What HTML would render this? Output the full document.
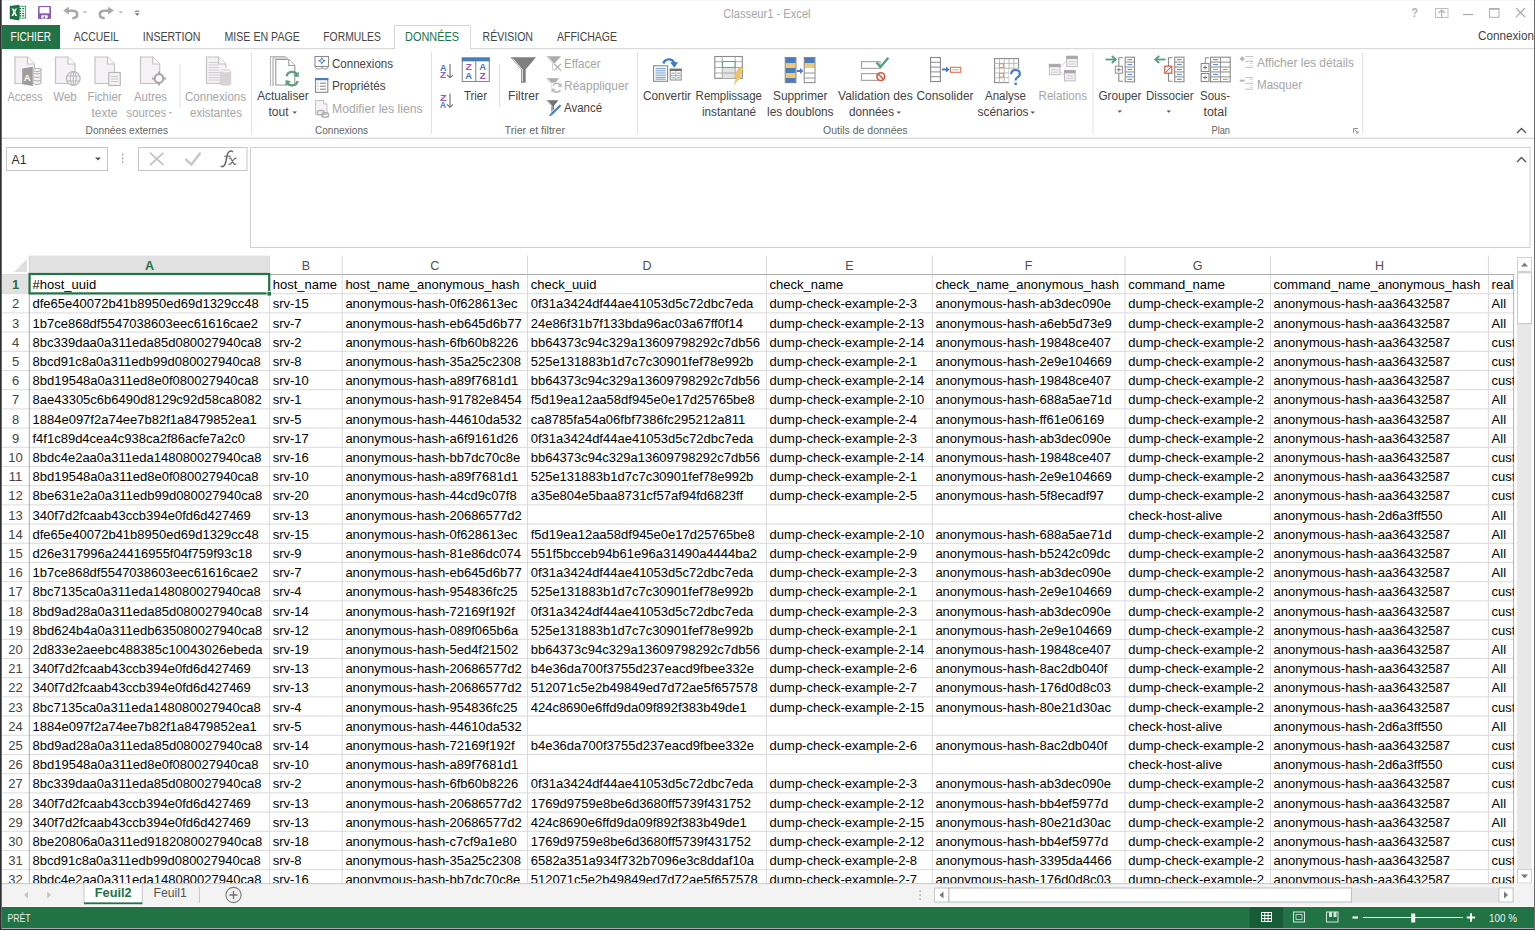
<!DOCTYPE html>
<html><head><meta charset="utf-8"><title>Classeur1 - Excel</title>
<style>
html,body{margin:0;padding:0;background:#2d2f31;overflow:hidden;}
svg{display:block;font-family:"Liberation Sans",sans-serif;}
text{white-space:pre;}
</style></head><body>
<svg width="1535" height="930" viewBox="0 0 1535 930">
<rect x="0" y="0" width="1535" height="930" fill="#2d2f31" />
<rect x="1.5" y="0" width="1533" height="929" fill="#a9a9a9" />
<rect x="2" y="0" width="1532" height="928" fill="#ffffff" />
<rect x="2" y="0" width="1532" height="1" fill="#f6f6f6" />
<rect x="19" y="6.3" width="6.6" height="11.8" fill="#ffffff" stroke="#4f9a6c" stroke-width="1" />
<line x1="19.2" y1="8.6" x2="21.2" y2="8.6" stroke="#1f7043" stroke-width="1.3" />
<line x1="22.2" y1="8.6" x2="24.2" y2="8.6" stroke="#1f7043" stroke-width="1.3" />
<line x1="19.2" y1="11.1" x2="21.2" y2="11.1" stroke="#1f7043" stroke-width="1.3" />
<line x1="22.2" y1="11.1" x2="24.2" y2="11.1" stroke="#5aa57a" stroke-width="1.3" />
<line x1="19.2" y1="13.5" x2="21.2" y2="13.5" stroke="#1f7043" stroke-width="1.3" />
<line x1="22.2" y1="13.5" x2="24.2" y2="13.5" stroke="#1f7043" stroke-width="1.3" />
<line x1="19.2" y1="15.8" x2="21.2" y2="15.8" stroke="#1f7043" stroke-width="1.3" />
<line x1="22.2" y1="15.8" x2="24.2" y2="15.8" stroke="#1f7043" stroke-width="1.3" />
<line x1="21.7" y1="6.3" x2="21.7" y2="18.1" stroke="#d8e8de" stroke-width="0.6" />
<path d="M9.8 5.9 L19.3 4.7 L19.3 20.5 L9.8 18.9 Z" fill="#1e7145" />
<path d="M11.7 8.4 L13.5 8.4 L14.4 10.6 L15.3 8.4 L17 8.4 L15.3 12.1 L17.1 15.9 L15.3 15.9 L14.3 13.6 L13.3 15.9 L11.5 15.9 L13.4 12.1 Z" fill="#ffffff" />
<rect x="38" y="6" width="13" height="13" fill="#8a5bb6" rx="1.2"/>
<rect x="39.6" y="7.1" width="9.8" height="6.2" fill="#ffffff" />
<rect x="41.3" y="15.2" width="6.4" height="3.2" fill="#ffffff" rx="0.8"/>
<rect x="43.5" y="16.3" width="1.6" height="2.2" fill="#8a5bb6" />
<path d="M63.2 10.6 L68.8 6.8 L68.8 14.4 Z" fill="#a8a8a8" />
<path d="M67.5 10.8 L72.3 10.8 Q77.2 10.8 77.2 14.5 Q77.2 18 72.3 18.2" fill="none" stroke="#a8a8a8" stroke-width="2.6" />
<path d="M82.5 11.2 L87.3 11.2 L84.9 13.6 Z" fill="#b8b8b8" />
<path d="M113.8 10.6 L108.2 6.8 L108.2 14.4 Z" fill="#a8a8a8" />
<path d="M109.5 10.8 L104.7 10.8 Q99.8 10.8 99.8 14.5 Q99.8 18 104.7 18.2" fill="none" stroke="#a8a8a8" stroke-width="2.6" />
<path d="M118.4 11.2 L123.2 11.2 L120.8 13.6 Z" fill="#b8b8b8" />
<line x1="135" y1="11.2" x2="139.3" y2="11.2" stroke="#6f6f6f" stroke-width="1.1" />
<path d="M134.8 13.2 L139.5 13.2 L137.15 15.8 Z" fill="#6f6f6f" />
<text x="723.30" y="17.50" font-size="12" fill="#a6a6a6" textLength="87.30" lengthAdjust="spacingAndGlyphs" >Classeur1 - Excel</text>
<text x="1411.20" y="17.30" font-size="12.5" fill="#b5b5b5" font-weight="bold" textLength="6.80" lengthAdjust="spacingAndGlyphs" >?</text>
<rect x="1435.5" y="8.5" width="12.5" height="9" fill="none" stroke="#c0c0c0" stroke-width="1" />
<path d="M1438.5 13 L1441.75 10 L1445 13 M1441.75 10.3 L1441.75 17" fill="none" stroke="#b0b0b0" stroke-width="1.2" />
<line x1="1463" y1="14.5" x2="1473.5" y2="14.5" stroke="#aaaaaa" stroke-width="1.2" />
<rect x="1489.5" y="8.5" width="9.5" height="8.8" fill="none" stroke="#b0b0b0" stroke-width="1" />
<line x1="1489.5" y1="9.2" x2="1499" y2="9.2" stroke="#b0b0b0" stroke-width="1.2" />
<path d="M1516 8 L1525 17 M1525 8 L1516 17" fill="none" stroke="#a8a8a8" stroke-width="1.1" />
<rect x="2" y="48" width="1532" height="1.2" fill="#d9d9d9" />
<rect x="2" y="25" width="58" height="24" fill="#217346" />
<text x="10.50" y="41.00" font-size="12.5" fill="#ffffff" textLength="40.50" lengthAdjust="spacingAndGlyphs" >FICHIER</text>
<path d="M394.5 49 L394.5 25.5 L470.3 25.5 L470.3 49" fill="none" stroke="#d4d4d4" stroke-width="1" />
<rect x="395" y="26" width="75" height="24" fill="#ffffff" />
<text x="73.80" y="41.00" font-size="12.5" fill="#444444" textLength="45.00" lengthAdjust="spacingAndGlyphs" >ACCUEIL</text>
<text x="142.80" y="41.00" font-size="12.5" fill="#444444" textLength="57.70" lengthAdjust="spacingAndGlyphs" >INSERTION</text>
<text x="224.50" y="41.00" font-size="12.5" fill="#444444" textLength="75.30" lengthAdjust="spacingAndGlyphs" >MISE EN PAGE</text>
<text x="323.30" y="41.00" font-size="12.5" fill="#444444" textLength="57.50" lengthAdjust="spacingAndGlyphs" >FORMULES</text>
<text x="482.50" y="41.00" font-size="12.5" fill="#444444" textLength="50.50" lengthAdjust="spacingAndGlyphs" >RÉVISION</text>
<text x="557.00" y="41.00" font-size="12.5" fill="#444444" textLength="60.00" lengthAdjust="spacingAndGlyphs" >AFFICHAGE</text>
<text x="405.00" y="41.00" font-size="12.5" fill="#217346" textLength="54.00" lengthAdjust="spacingAndGlyphs" >DONNÉES</text>
<text x="1478.00" y="39.80" font-size="12.5" fill="#444444" textLength="56.00" lengthAdjust="spacingAndGlyphs" >Connexion</text>
<rect x="2" y="137.6" width="1532" height="1.2" fill="#d5d5d5" />
<line x1="251.6" y1="52" x2="251.6" y2="134" stroke="#e1e1e1" stroke-width="1" />
<line x1="431.5" y1="52" x2="431.5" y2="134" stroke="#e1e1e1" stroke-width="1" />
<line x1="637.5" y1="52" x2="637.5" y2="134" stroke="#e1e1e1" stroke-width="1" />
<line x1="1093" y1="52" x2="1093" y2="134" stroke="#e1e1e1" stroke-width="1" />
<line x1="1362.7" y1="52" x2="1362.7" y2="134" stroke="#e1e1e1" stroke-width="1" />
<text x="7.60" y="100.90" font-size="12.5" fill="#a6a6a6" textLength="34.80" lengthAdjust="spacingAndGlyphs" >Access</text>
<text x="53.20" y="100.90" font-size="12.5" fill="#a6a6a6" textLength="23.60" lengthAdjust="spacingAndGlyphs" >Web</text>
<text x="87.50" y="100.90" font-size="12.5" fill="#a6a6a6" textLength="34.00" lengthAdjust="spacingAndGlyphs" >Fichier</text>
<text x="91.50" y="116.60" font-size="12.5" fill="#a6a6a6" textLength="26.00" lengthAdjust="spacingAndGlyphs" >texte</text>
<text x="134.00" y="100.90" font-size="12.5" fill="#a6a6a6" textLength="33.00" lengthAdjust="spacingAndGlyphs" >Autres</text>
<text x="126.60" y="116.60" font-size="12.5" fill="#a6a6a6" textLength="39.60" lengthAdjust="spacingAndGlyphs" >sources</text>
<path d="M168.5 112 L172.5 112 L170.5 114 Z" fill="#bdbdbd" />
<line x1="180" y1="64" x2="180" y2="108" stroke="#e1e1e1" stroke-width="1" />
<text x="185.00" y="100.90" font-size="12.5" fill="#a6a6a6" textLength="61.00" lengthAdjust="spacingAndGlyphs" >Connexions</text>
<text x="190.00" y="116.60" font-size="12.5" fill="#a6a6a6" textLength="52.00" lengthAdjust="spacingAndGlyphs" >existantes</text>
<text x="85.60" y="134.30" font-size="11.5" fill="#666666" textLength="82.40" lengthAdjust="spacingAndGlyphs" >Données externes</text>
<text x="257.20" y="100.40" font-size="12.5" fill="#444444" textLength="51.60" lengthAdjust="spacingAndGlyphs" >Actualiser</text>
<text x="268.50" y="116.00" font-size="12.5" fill="#444444" textLength="20.00" lengthAdjust="spacingAndGlyphs" >tout</text>
<path d="M292.5 111.5 L297 111.5 L294.75 113.8 Z" fill="#555" />
<text x="332.00" y="67.50" font-size="12.5" fill="#444444" textLength="61.00" lengthAdjust="spacingAndGlyphs" >Connexions</text>
<text x="332.00" y="89.70" font-size="12.5" fill="#444444" textLength="53.60" lengthAdjust="spacingAndGlyphs" >Propriétés</text>
<text x="332.00" y="112.50" font-size="12.5" fill="#a6a6a6" textLength="90.60" lengthAdjust="spacingAndGlyphs" >Modifier les liens</text>
<text x="315.00" y="134.30" font-size="11.5" fill="#666666" textLength="53.00" lengthAdjust="spacingAndGlyphs" >Connexions</text>
<text x="464.00" y="100.40" font-size="12.5" fill="#444444" textLength="23.00" lengthAdjust="spacingAndGlyphs" >Trier</text>
<line x1="499.5" y1="64" x2="499.5" y2="107" stroke="#e1e1e1" stroke-width="1" />
<text x="508.00" y="100.40" font-size="12.5" fill="#444444" textLength="31.00" lengthAdjust="spacingAndGlyphs" >Filtrer</text>
<text x="564.00" y="67.80" font-size="12.5" fill="#a6a6a6" textLength="36.60" lengthAdjust="spacingAndGlyphs" >Effacer</text>
<text x="564.00" y="89.70" font-size="12.5" fill="#a6a6a6" textLength="64.60" lengthAdjust="spacingAndGlyphs" >Réappliquer</text>
<text x="564.00" y="112.40" font-size="12.5" fill="#444444" textLength="38.00" lengthAdjust="spacingAndGlyphs" >Avancé</text>
<text x="504.50" y="134.30" font-size="11.5" fill="#666666" textLength="60.50" lengthAdjust="spacingAndGlyphs" >Trier et filtrer</text>
<text x="643.00" y="100.40" font-size="12.5" fill="#444444" textLength="48.00" lengthAdjust="spacingAndGlyphs" >Convertir</text>
<text x="695.60" y="100.40" font-size="12.5" fill="#444444" textLength="66.40" lengthAdjust="spacingAndGlyphs" >Remplissage</text>
<text x="702.00" y="116.00" font-size="12.5" fill="#444444" textLength="54.00" lengthAdjust="spacingAndGlyphs" >instantané</text>
<text x="773.00" y="100.40" font-size="12.5" fill="#444444" textLength="54.50" lengthAdjust="spacingAndGlyphs" >Supprimer</text>
<text x="767.00" y="116.00" font-size="12.5" fill="#444444" textLength="66.50" lengthAdjust="spacingAndGlyphs" >les doublons</text>
<text x="838.00" y="100.40" font-size="12.5" fill="#444444" textLength="74.70" lengthAdjust="spacingAndGlyphs" >Validation des</text>
<text x="849.00" y="116.00" font-size="12.5" fill="#444444" textLength="45.00" lengthAdjust="spacingAndGlyphs" >données</text>
<path d="M896.5 111.5 L901 111.5 L898.75 113.8 Z" fill="#555" />
<text x="916.50" y="100.40" font-size="12.5" fill="#444444" textLength="57.00" lengthAdjust="spacingAndGlyphs" >Consolider</text>
<text x="985.00" y="100.40" font-size="12.5" fill="#444444" textLength="41.00" lengthAdjust="spacingAndGlyphs" >Analyse</text>
<text x="977.50" y="116.00" font-size="12.5" fill="#444444" textLength="51.00" lengthAdjust="spacingAndGlyphs" >scénarios</text>
<path d="M1030.5 111.5 L1035 111.5 L1032.75 113.8 Z" fill="#555" />
<text x="1038.50" y="100.40" font-size="12.5" fill="#a6a6a6" textLength="48.50" lengthAdjust="spacingAndGlyphs" >Relations</text>
<text x="823.00" y="134.30" font-size="11.5" fill="#666666" textLength="84.60" lengthAdjust="spacingAndGlyphs" >Outils de données</text>
<text x="1098.50" y="100.40" font-size="12.5" fill="#444444" textLength="43.00" lengthAdjust="spacingAndGlyphs" >Grouper</text>
<path d="M1117.5 110.5 L1122 110.5 L1119.75 112.8 Z" fill="#555" />
<text x="1146.00" y="100.40" font-size="12.5" fill="#444444" textLength="47.50" lengthAdjust="spacingAndGlyphs" >Dissocier</text>
<path d="M1166.5 110.5 L1171 110.5 L1168.75 112.8 Z" fill="#555" />
<text x="1200.00" y="100.40" font-size="12.5" fill="#444444" textLength="30.00" lengthAdjust="spacingAndGlyphs" >Sous-</text>
<text x="1203.50" y="116.00" font-size="12.5" fill="#444444" textLength="23.50" lengthAdjust="spacingAndGlyphs" >total</text>
<text x="1257.00" y="67.30" font-size="12.5" fill="#a6a6a6" textLength="97.00" lengthAdjust="spacingAndGlyphs" >Afficher les détails</text>
<text x="1257.00" y="88.90" font-size="12.5" fill="#a6a6a6" textLength="45.00" lengthAdjust="spacingAndGlyphs" >Masquer</text>
<text x="1211.50" y="134.30" font-size="11.5" fill="#666666" textLength="18.50" lengthAdjust="spacingAndGlyphs" >Plan</text>
<path d="M1353.5 133 L1353.5 128.5 L1358 128.5 M1355 130 L1358 133 M1356 133 L1358 133 L1358 131" fill="none" stroke="#8a8a8a" stroke-width="0.9" />
<path d="M1517 133 L1521.5 128.5 L1526 133" fill="none" stroke="#555" stroke-width="1.3" />
<path d="M15 57 L27.5 57 L34.5 64 L34.5 83.5 L15 83.5 Z" fill="#f5f1f5" stroke="#c4c2c4" stroke-width="1.2" stroke-linejoin="miter"/>
<path d="M27.5 57 L27.5 64 L34.5 64" fill="#ffffff" stroke="#c4c2c4" stroke-width="1.2" />
<path d="M22.2 68.5 L32.8 66.8 L32.8 86 L22.2 84.3 Z" fill="#9d9d9d" />
<text x="27.30" y="81.00" font-size="9.5" fill="#ffffff" font-weight="bold" text-anchor="middle" >A</text>
<g fill="#f5f1f5" stroke="#b8b8b8" stroke-width="1.1">
<path d="M33 79 L33 82.8 A4 1.6 0 0 0 41 82.8 L41 79"/>
<path d="M33 75.5 L33 79.3 A4 1.6 0 0 0 41 79.3 L41 75.5"/>
<path d="M33 72 L33 75.8 A4 1.6 0 0 0 41 75.8 L41 72"/>
<path d="M33 68.5 L33 72.3 A4 1.6 0 0 0 41 72.3 L41 68.5"/>
<ellipse cx="37" cy="70" rx="4" ry="1.6"/>
</g>
<path d="M55.5 57 L68.0 57 L75.0 64 L75.0 83.5 L55.5 83.5 Z" fill="#f5f1f5" stroke="#c4c2c4" stroke-width="1.2" stroke-linejoin="miter"/>
<path d="M68.0 57 L68.0 64 L75.0 64" fill="#ffffff" stroke="#c4c2c4" stroke-width="1.2" />
<circle cx="73.3" cy="78.5" r="6.8" fill="#f5f1f5" stroke="#b8b8b8" stroke-width="1.2"/>
<ellipse cx="73.3" cy="78.5" rx="3" ry="6.8" fill="none" stroke="#b8b8b8" stroke-width="1"/>
<line x1="66.5" y1="76" x2="80" y2="76" stroke="#b8b8b8" stroke-width="1" />
<line x1="66.5" y1="81" x2="80" y2="81" stroke="#b8b8b8" stroke-width="1" />
<line x1="73.3" y1="71.7" x2="73.3" y2="85.3" stroke="#b8b8b8" stroke-width="1" />
<path d="M95 57 L107.5 57 L114.5 64 L114.5 83.5 L95 83.5 Z" fill="#f5f1f5" stroke="#c4c2c4" stroke-width="1.2" stroke-linejoin="miter"/>
<path d="M107.5 57 L107.5 64 L114.5 64" fill="#ffffff" stroke="#c4c2c4" stroke-width="1.2" />
<rect x="108.8" y="72.5" width="11.5" height="13" fill="#f5f1f5" stroke="#b8b8b8" stroke-width="1.2" />
<line x1="110.8" y1="76.5" x2="118.3" y2="76.5" stroke="#c8c8c8" stroke-width="1" />
<line x1="110.8" y1="79" x2="118.3" y2="79" stroke="#c8c8c8" stroke-width="1" />
<line x1="110.8" y1="81.5" x2="118.3" y2="81.5" stroke="#c8c8c8" stroke-width="1" />
<path d="M140.5 57 L152.7 57 L159.7 64 L159.7 83.5 L140.5 83.5 Z" fill="#f5f1f5" stroke="#c4c2c4" stroke-width="1.2" stroke-linejoin="miter"/>
<path d="M152.7 57 L152.7 64 L159.7 64" fill="#ffffff" stroke="#c4c2c4" stroke-width="1.2" />
<circle cx="159" cy="78.5" r="4.3" fill="#ffffff" stroke="#a8a8a8" stroke-width="2.2"/>
<path d="M159 71.5 L159 74 M159 83 L159 85.5 M152 78.5 L154.5 78.5 M163.5 78.5 L166 78.5" fill="none" stroke="#a8a8a8" stroke-width="2" />
<path d="M206.5 57 L218.7 57 L225.7 64 L225.7 83.5 L206.5 83.5 Z" fill="#f5f1f5" stroke="#c4c2c4" stroke-width="1.2" stroke-linejoin="miter"/>
<path d="M218.7 57 L218.7 64 L225.7 64" fill="#ffffff" stroke="#c4c2c4" stroke-width="1.2" />
<line x1="208.5" y1="62.5" x2="218" y2="62.5" stroke="#c8c8c8" stroke-width="0.9" />
<line x1="208.5" y1="65" x2="218" y2="65" stroke="#c8c8c8" stroke-width="0.9" />
<line x1="208.5" y1="67.5" x2="219" y2="67.5" stroke="#c8c8c8" stroke-width="0.9" />
<line x1="208.5" y1="70" x2="219" y2="70" stroke="#c8c8c8" stroke-width="0.9" />
<line x1="208.5" y1="72.5" x2="219" y2="72.5" stroke="#c8c8c8" stroke-width="0.9" />
<line x1="208.5" y1="75" x2="219" y2="75" stroke="#c8c8c8" stroke-width="0.9" />
<line x1="208.5" y1="77.5" x2="219" y2="77.5" stroke="#c8c8c8" stroke-width="0.9" />
<line x1="208.5" y1="80" x2="219" y2="80" stroke="#c8c8c8" stroke-width="0.9" />
<path d="M219.5 70 L219.5 84 A5.85 1.8 0 0 0 231.2 84 L231.2 70 Z" fill="#d7d3d7" />
<ellipse cx="225.35" cy="70" rx="5.85" ry="1.8" fill="#e4e1e4" stroke="#ffffff" stroke-width="0.8"/>
<path d="M270.5 86 L270.5 56.5 L286 56.5" fill="none" stroke="#b5b5b5" stroke-width="1.1" />
<path d="M273 86 L273 58 L288 58" fill="none" stroke="#a8a8a8" stroke-width="1.1" />
<path d="M275.8 59.5 L288.8 59.5 L294.8 65.5 L294.8 85.0 L275.8 85.0 Z" fill="#ffffff" stroke="#9a9a9a" stroke-width="1.1" stroke-linejoin="miter"/>
<path d="M288.8 59.5 L288.8 65.5 L294.8 65.5" fill="#ffffff" stroke="#9a9a9a" stroke-width="1.1" />
<g fill="none" stroke="#5c9e80" stroke-width="2.3">
<path d="M286.6 76.2 A5.6 5.6 0 0 1 297.2 75.2"/>
<path d="M297.6 81 A5.6 5.6 0 0 1 287 82"/>
</g>
<path d="M298.8 71.5 L298.6 77.2 L293.2 76 Z" fill="#5c9e80" />
<path d="M285.4 85.8 L285.6 80 L291 81.3 Z" fill="#5c9e80" />
<rect x="315" y="56.5" width="13.5" height="10" fill="#ffffff" stroke="#8a8a8a" stroke-width="1.1" />
<path d="M315.5 67 Q315.5 69 318 69 L320.5 69 Q322 69 322 67 Q322 69 324 69 L326 69 Q328 69 328 67" fill="none" stroke="#9a9a9a" stroke-width="1" />
<path d="M321.8 56.9 L323.1 59.5 L325.9 60.8 L323.1 62.1 L321.8 64.7 L320.5 62.1 L317.7 60.8 L320.5 59.5 Z" fill="#3d79c0" />
<circle cx="321.8" cy="60.8" r="1.3" fill="#ffffff"/>
<rect x="315.5" y="78.5" width="12.3" height="13.8" fill="#ffffff" stroke="#8a8a8a" stroke-width="1.1" />
<rect x="315" y="78" width="13.3" height="2.2" fill="#4a7ebb" />
<line x1="317.3" y1="83.2" x2="318.5" y2="83.2" stroke="#9a9a9a" stroke-width="1" />
<line x1="320" y1="83.2" x2="326" y2="83.2" stroke="#707070" stroke-width="0.9" />
<line x1="317.3" y1="86.2" x2="318.5" y2="86.2" stroke="#9a9a9a" stroke-width="1" />
<line x1="320" y1="86.2" x2="326" y2="86.2" stroke="#707070" stroke-width="0.9" />
<line x1="317.3" y1="89.2" x2="318.5" y2="89.2" stroke="#9a9a9a" stroke-width="1" />
<line x1="320" y1="89.2" x2="326" y2="89.2" stroke="#707070" stroke-width="0.9" />
<path d="M315.5 100.5 L323.5 100.5 L327.0 104.0 L327.0 114.5 L315.5 114.5 Z" fill="#f5f1f5" stroke="#c4c2c4" stroke-width="1" stroke-linejoin="miter"/>
<path d="M323.5 100.5 L323.5 104.0 L327.0 104.0" fill="#ffffff" stroke="#c4c2c4" stroke-width="1" />
<g fill="none" stroke="#b3b3b3" stroke-width="1.5">
<rect x="317.3" y="110.6" width="6.8" height="4.2" rx="2.1"/>
<rect x="321.8" y="112.8" width="6.8" height="4.2" rx="2.1"/>
</g>
<text x="440.00" y="71.00" font-size="8.5" fill="#3f7dc0" font-weight="bold" textLength="6.50" lengthAdjust="spacingAndGlyphs" >A</text>
<text x="440.00" y="78.00" font-size="8.5" fill="#9b59b6" font-weight="bold" textLength="6.00" lengthAdjust="spacingAndGlyphs" >Z</text>
<text x="440.00" y="100.50" font-size="8.5" fill="#9b59b6" font-weight="bold" textLength="6.50" lengthAdjust="spacingAndGlyphs" >Z</text>
<text x="440.00" y="107.50" font-size="8.5" fill="#3f7dc0" font-weight="bold" textLength="6.00" lengthAdjust="spacingAndGlyphs" >A</text>
<path d="M450 64 L450 77.5 M447 74.8 L450 77.8 L453 74.8" fill="none" stroke="#707070" stroke-width="1.1" />
<path d="M450 93.5 L450 107.0 M447 104.3 L450 107.3 L453 104.3" fill="none" stroke="#707070" stroke-width="1.1" />
<rect x="462.3" y="58" width="27" height="23.5" fill="#ffffff" stroke="#8a8a8a" stroke-width="1.1" />
<rect x="461.8" y="57.5" width="28" height="3.8" fill="#4a7ebb" />
<line x1="475.8" y1="61" x2="475.8" y2="81.5" stroke="#8a8a8a" stroke-width="1.1" />
<text x="465.50" y="70.00" font-size="8.5" fill="#9b59b6" font-weight="bold" textLength="6.30" lengthAdjust="spacingAndGlyphs" >Z</text>
<text x="465.20" y="79.00" font-size="8.5" fill="#3f7dc0" font-weight="bold" textLength="6.80" lengthAdjust="spacingAndGlyphs" >A</text>
<text x="479.20" y="70.00" font-size="8.5" fill="#3f7dc0" font-weight="bold" textLength="6.80" lengthAdjust="spacingAndGlyphs" >A</text>
<text x="479.50" y="79.00" font-size="8.5" fill="#9b59b6" font-weight="bold" textLength="6.30" lengthAdjust="spacingAndGlyphs" >Z</text>
<path d="M510.5 57.2 L536 57.2 L525.7 69.5 L525.7 82.8 L521 82.8 L521 69.5 Z" fill="#7f7f7f" />
<path d="M512.8 58.6 L522.3 69.8 L522.3 81.5" fill="none" stroke="#ffffff" stroke-width="0.9" />
<path d="M546.5 56.2 L561.0 56.2 L555.15 62.7 L555.15 70.2 L552.35 70.2 L552.35 62.7 Z" fill="#ababab" />
<path d="M548.3 57.1 L553.25 63.0 L553.25 69.4" fill="none" stroke="#ffffff" stroke-width="0.7" />
<rect x="553.2" y="63.2" width="8.5" height="8" fill="#ffffff" />
<path d="M554 63.8 L561 70.6 M561 63.8 L554 70.6" fill="none" stroke="#b0b0b0" stroke-width="1.2" />
<path d="M546.5 78.2 L559.0 78.2 L554.15 84.2 L554.15 91.7 L551.35 91.7 L551.35 84.2 Z" fill="#ababab" />
<path d="M548.3 79.10000000000001 L552.25 84.5 L552.25 90.9" fill="none" stroke="#ffffff" stroke-width="0.7" />
<rect x="551.5" y="82.6" width="11" height="11" fill="#ffffff" />
<path d="M553 85.6 A4.1 4.1 0 0 1 560.6 86.2" fill="none" stroke="#bdbdbd" stroke-width="1.6" />
<path d="M560.4 90 A4.1 4.1 0 0 1 552.9 89.4" fill="none" stroke="#bdbdbd" stroke-width="1.6" />
<path d="M561.8 83 L561.6 87.5 L557.6 86.3 Z" fill="#bdbdbd" />
<path d="M551.6 92.8 L551.8 88.3 L555.8 89.5 Z" fill="#bdbdbd" />
<path d="M546.5 100.3 L558.5 100.3 L553.9 105.8 L553.9 112.8 L551.1 112.8 L551.1 105.8 Z" fill="#707070" />
<path d="M548.3 101.2 L552.0 106.1 L552.0 112.0" fill="none" stroke="#ffffff" stroke-width="0.7" />
<path d="M550.8 114.8 L560.6 105.2" fill="none" stroke="#ffffff" stroke-width="3.6" />
<path d="M551.2 114.4 L560.6 105.2" fill="none" stroke="#4382c8" stroke-width="2.2" />
<path d="M549.2 116.4 L550 113.6 L552 115.6 Z" fill="#4382c8" />
<rect x="653.6" y="65.8" width="14" height="15.5" fill="#ffffff" stroke="#8a8a8a" stroke-width="1.1" />
<line x1="655.5" y1="68.6" x2="665.8" y2="68.6" stroke="#5b8fd0" stroke-width="0.9" />
<line x1="655.5" y1="70.8" x2="665.8" y2="70.8" stroke="#5b8fd0" stroke-width="0.9" />
<line x1="655.5" y1="73" x2="665.8" y2="73" stroke="#5b8fd0" stroke-width="0.9" />
<line x1="655.5" y1="75.2" x2="665.8" y2="75.2" stroke="#5b8fd0" stroke-width="0.9" />
<line x1="655.5" y1="77.4" x2="665.8" y2="77.4" stroke="#5b8fd0" stroke-width="0.9" />
<line x1="655.5" y1="79.2" x2="665.8" y2="79.2" stroke="#5b8fd0" stroke-width="0.9" />
<rect x="670.2" y="69.2" width="11" height="10.8" fill="#ffffff" stroke="#8a8a8a" stroke-width="1" />
<rect x="669.8" y="68.8" width="11.8" height="2.2" fill="#707070" />
<line x1="675.8" y1="71" x2="675.8" y2="80" stroke="#9a9a9a" stroke-width="0.8" />
<line x1="670.2" y1="75.5" x2="681.2" y2="75.5" stroke="#9a9a9a" stroke-width="0.8" />
<line x1="671.5" y1="73.2" x2="674.7" y2="73.2" stroke="#5b8fd0" stroke-width="0.9" />
<line x1="677" y1="73.2" x2="680.2" y2="73.2" stroke="#5b8fd0" stroke-width="0.9" />
<line x1="671.5" y1="77.8" x2="674.7" y2="77.8" stroke="#5b8fd0" stroke-width="0.9" />
<line x1="677" y1="77.8" x2="680.2" y2="77.8" stroke="#5b8fd0" stroke-width="0.9" />
<path d="M663.3 63.5 A6 6.5 0 0 1 674.3 63" fill="none" stroke="#3f7dc0" stroke-width="2.4" />
<path d="M670.2 62.3 L678.2 62.3 L674.2 67.7 Z" fill="#3f7dc0" />
<rect x="714.8" y="56.5" width="27.5" height="21.8" fill="#ffffff" stroke="#8a8a8a" stroke-width="1.1" />
<rect x="722.2" y="68.2" width="13" height="10" fill="#e3e3e3" />
<line x1="722.2" y1="56.5" x2="722.2" y2="78.3" stroke="#a0a0a0" stroke-width="0.9" />
<line x1="735.2" y1="56.5" x2="735.2" y2="78.3" stroke="#a0a0a0" stroke-width="0.9" />
<line x1="714.8" y1="61.7" x2="742.3" y2="61.7" stroke="#a0a0a0" stroke-width="0.9" />
<line x1="714.8" y1="67.5" x2="742.3" y2="67.5" stroke="#a0a0a0" stroke-width="0.9" />
<line x1="714.8" y1="73" x2="742.3" y2="73" stroke="#a0a0a0" stroke-width="0.9" />
<rect x="722.5" y="61.5" width="12.5" height="6" fill="#ffffff" stroke="#5fa98a" stroke-width="1.1" />
<path d="M738 68 L743.8 68 L739.8 75 L742.5 75 L733.2 86 L736.2 77.5 L733.5 77.5 Z" fill="#f0c46a" />
<rect x="785.5" y="57.8" width="10.2" height="5.2" fill="#4a7ebb" />
<rect x="785.5" y="63.0" width="10.2" height="5" fill="#f0c878" />
<rect x="785.5" y="68.0" width="10.2" height="5" fill="#4a7ebb" />
<rect x="785.5" y="73.0" width="10.2" height="5" fill="#f0c878" />
<rect x="785.5" y="78.0" width="10.2" height="4.8" fill="#4a7ebb" />
<rect x="785.2" y="57.5" width="10.799999999999999" height="25.2" fill="none" stroke="#7a7a7a" stroke-width="0.9" />
<rect x="804.5" y="57.8" width="10.2" height="5.2" fill="#4a7ebb" />
<rect x="804.5" y="63.0" width="10.2" height="5" fill="#f0c878" />
<rect x="804.5" y="68.0" width="10.2" height="5" fill="#ffffff" />
<rect x="804.5" y="73.0" width="10.2" height="5" fill="#ffffff" />
<rect x="804.5" y="78.0" width="10.2" height="4.8" fill="#ffffff" />
<rect x="804.2" y="57.5" width="10.799999999999999" height="25.2" fill="none" stroke="#7a7a7a" stroke-width="0.9" />
<line x1="804.5" y1="73" x2="814.7" y2="73" stroke="#8a8a8a" stroke-width="0.9" />
<line x1="804.5" y1="78" x2="814.7" y2="78" stroke="#8a8a8a" stroke-width="0.9" />
<path d="M797 71 L801 71" fill="none" stroke="#4a7ebb" stroke-width="2" />
<path d="M800 68 L803.4 71 L800 74 Z" fill="#4a7ebb" />
<rect x="861.5" y="61.6" width="18.5" height="6.8" fill="#ffffff" stroke="#a8a8a8" stroke-width="1.2" />
<rect x="861.5" y="73.6" width="16.5" height="6.8" fill="#ffffff" stroke="#a8a8a8" stroke-width="1.2" />
<path d="M876.5 62.5 L880.5 67 L888.3 57.8" fill="none" stroke="#4ea383" stroke-width="2.4" />
<circle cx="880.8" cy="76.6" r="3.9" fill="#ffffff" stroke="#d9553a" stroke-width="1.6"/>
<path d="M878.2 74 L883.4 79.2" fill="none" stroke="#d9553a" stroke-width="1.6" />
<rect x="930.6" y="57.5" width="9.8" height="24" fill="#ffffff" stroke="#8a8a8a" stroke-width="1.1" />
<line x1="930.6" y1="62.3" x2="940.4" y2="62.3" stroke="#8a8a8a" stroke-width="1" />
<line x1="930.6" y1="67.1" x2="940.4" y2="67.1" stroke="#8a8a8a" stroke-width="1" />
<line x1="930.6" y1="71.9" x2="940.4" y2="71.9" stroke="#8a8a8a" stroke-width="1" />
<line x1="930.6" y1="76.7" x2="940.4" y2="76.7" stroke="#8a8a8a" stroke-width="1" />
<path d="M942 69.5 L947.5 69.5" fill="none" stroke="#3f7dc0" stroke-width="2" />
<path d="M946 66.4 L949.6 69.5 L946 72.6 Z" fill="#3f7dc0" />
<rect x="950.5" y="67.3" width="10.2" height="5" fill="#ffffff" stroke="#e0735a" stroke-width="1.1" />
<line x1="952.3" y1="69.8" x2="959" y2="69.8" stroke="#a8a8a8" stroke-width="0.8" />
<rect x="994.6" y="58.6" width="24" height="24" fill="#ffffff" stroke="#8a8a8a" stroke-width="1.1" />
<line x1="999.4" y1="58.6" x2="999.4" y2="82.6" stroke="#b5b5b5" stroke-width="0.9" />
<line x1="994.6" y1="63.4" x2="1018.6" y2="63.4" stroke="#b5b5b5" stroke-width="0.9" />
<line x1="1004.2" y1="58.6" x2="1004.2" y2="82.6" stroke="#b5b5b5" stroke-width="0.9" />
<line x1="994.6" y1="68.2" x2="1018.6" y2="68.2" stroke="#b5b5b5" stroke-width="0.9" />
<line x1="1009.0" y1="58.6" x2="1009.0" y2="82.6" stroke="#b5b5b5" stroke-width="0.9" />
<line x1="994.6" y1="73.0" x2="1018.6" y2="73.0" stroke="#b5b5b5" stroke-width="0.9" />
<line x1="1013.8000000000001" y1="58.6" x2="1013.8000000000001" y2="82.6" stroke="#b5b5b5" stroke-width="0.9" />
<line x1="994.6" y1="77.8" x2="1018.6" y2="77.8" stroke="#b5b5b5" stroke-width="0.9" />
<rect x="999.6" y="63.7" width="3.8" height="3.8" fill="#ffffff" stroke="#e8904a" stroke-width="1" />
<rect x="999.6" y="73.3" width="3.8" height="3.8" fill="#ffffff" stroke="#e8904a" stroke-width="1" />
<rect x="1009" y="69" width="11" height="18" fill="#ffffff" />
<path d="M1011.2 74.2 Q1011.2 70 1015.5 70 Q1019.8 70 1019.8 73.8 Q1019.8 76.2 1017.3 77.4 Q1015.6 78.3 1015.6 80.6" fill="none" stroke="#3f7dc0" stroke-width="2.2" />
<rect x="1014.5" y="82.6" width="2.3" height="2.4" fill="#3f7dc0" />
<rect x="1049.4" y="64.4" width="10.6" height="10.3" fill="#f4eff4" stroke="#bdbdbd" stroke-width="1" />
<rect x="1048.9" y="63.900000000000006" width="11.6" height="3.2" fill="#a9a9a9" />
<line x1="1051.2" y1="69.63333333333334" x2="1058.2" y2="69.63333333333334" stroke="#c9c6c9" stroke-width="0.8" />
<line x1="1051.2" y1="72.16666666666667" x2="1058.2" y2="72.16666666666667" stroke="#c9c6c9" stroke-width="0.8" />
<rect x="1066.7" y="56.3" width="10.6" height="10.3" fill="#f4eff4" stroke="#bdbdbd" stroke-width="1" />
<rect x="1066.2" y="55.8" width="11.6" height="3.2" fill="#a9a9a9" />
<line x1="1068.5" y1="61.53333333333333" x2="1075.5" y2="61.53333333333333" stroke="#c9c6c9" stroke-width="0.8" />
<line x1="1068.5" y1="64.06666666666666" x2="1075.5" y2="64.06666666666666" stroke="#c9c6c9" stroke-width="0.8" />
<rect x="1064.5" y="70.6" width="10.6" height="10.3" fill="#f4eff4" stroke="#bdbdbd" stroke-width="1" />
<rect x="1064.0" y="70.1" width="11.6" height="3.2" fill="#a9a9a9" />
<line x1="1066.3" y1="75.83333333333333" x2="1073.3" y2="75.83333333333333" stroke="#c9c6c9" stroke-width="0.8" />
<line x1="1066.3" y1="78.36666666666666" x2="1073.3" y2="78.36666666666666" stroke="#c9c6c9" stroke-width="0.8" />
<path d="M1060 67.5 L1066.3 61 M1060 71 L1064.2 75.2" fill="none" stroke="#c8c8c8" stroke-width="0.9" />
<rect x="1125.2" y="57.2" width="9.3" height="24.6" fill="#ffffff" stroke="#8a8a8a" stroke-width="1.1" />
<line x1="1125.2" y1="62.120000000000005" x2="1134.5" y2="62.120000000000005" stroke="#8a8a8a" stroke-width="1" />
<line x1="1125.2" y1="67.04" x2="1134.5" y2="67.04" stroke="#8a8a8a" stroke-width="1" />
<line x1="1125.2" y1="71.96000000000001" x2="1134.5" y2="71.96000000000001" stroke="#8a8a8a" stroke-width="1" />
<line x1="1125.2" y1="76.88" x2="1134.5" y2="76.88" stroke="#8a8a8a" stroke-width="1" />
<line x1="1127.5" y1="59.660000000000004" x2="1132.2" y2="59.660000000000004" stroke="#5b8fd0" stroke-width="1.1" />
<line x1="1127.5" y1="64.58" x2="1132.2" y2="64.58" stroke="#5b8fd0" stroke-width="1.1" />
<line x1="1127.5" y1="69.5" x2="1132.2" y2="69.5" stroke="#5b8fd0" stroke-width="1.1" />
<line x1="1127.5" y1="74.42" x2="1132.2" y2="74.42" stroke="#5b8fd0" stroke-width="1.1" />
<line x1="1127.5" y1="79.33999999999999" x2="1132.2" y2="79.33999999999999" stroke="#5b8fd0" stroke-width="1.1" />
<path d="M1123 57.8 L1118.8 57.8 L1118.8 81.2 L1123 81.2" fill="none" stroke="#8a8a8a" stroke-width="1.1" />
<rect x="1115.3" y="66.2" width="7" height="7" fill="#ffffff" stroke="#8a8a8a" stroke-width="1" />
<path d="M1116.8 69.7 L1120.8 69.7 M1118.8 67.7 L1118.8 71.7" fill="none" stroke="#6a6a6a" stroke-width="0.9" />
<path d="M1105.5 59.5 L1115.5 59.5" fill="none" stroke="#52a17f" stroke-width="1.8" />
<path d="M1111.8 56 L1115.8 59.5 L1111.8 63" fill="none" stroke="#52a17f" stroke-width="1.8" />
<rect x="1174.7" y="57.2" width="9.3" height="24.6" fill="#ffffff" stroke="#8a8a8a" stroke-width="1.1" />
<line x1="1174.7" y1="62.120000000000005" x2="1184.0" y2="62.120000000000005" stroke="#8a8a8a" stroke-width="1" />
<line x1="1174.7" y1="67.04" x2="1184.0" y2="67.04" stroke="#8a8a8a" stroke-width="1" />
<line x1="1174.7" y1="71.96000000000001" x2="1184.0" y2="71.96000000000001" stroke="#8a8a8a" stroke-width="1" />
<line x1="1174.7" y1="76.88" x2="1184.0" y2="76.88" stroke="#8a8a8a" stroke-width="1" />
<line x1="1177.0" y1="59.660000000000004" x2="1181.7" y2="59.660000000000004" stroke="#5b8fd0" stroke-width="1.1" />
<line x1="1177.0" y1="64.58" x2="1181.7" y2="64.58" stroke="#5b8fd0" stroke-width="1.1" />
<line x1="1177.0" y1="69.5" x2="1181.7" y2="69.5" stroke="#5b8fd0" stroke-width="1.1" />
<line x1="1177.0" y1="74.42" x2="1181.7" y2="74.42" stroke="#5b8fd0" stroke-width="1.1" />
<line x1="1177.0" y1="79.33999999999999" x2="1181.7" y2="79.33999999999999" stroke="#5b8fd0" stroke-width="1.1" />
<path d="M1172.5 57.8 L1168.5 57.8 L1168.5 81.2 L1172.5 81.2" fill="none" stroke="#8a8a8a" stroke-width="1.1" />
<rect x="1164.8" y="66.2" width="7" height="7" fill="#ffffff" stroke="#d9553a" stroke-width="1.2" />
<path d="M1165.5 72.5 L1171.3 66.8" fill="none" stroke="#d9553a" stroke-width="1" />
<path d="M1155.5 59.5 L1165.5 59.5" fill="none" stroke="#52a17f" stroke-width="1.8" />
<path d="M1159.2 56 L1155.2 59.5 L1159.2 63" fill="none" stroke="#52a17f" stroke-width="1.8" />
<rect x="1210.6" y="57.2" width="19.6" height="24.6" fill="#ffffff" stroke="#8a8a8a" stroke-width="1.1" />
<line x1="1220.4" y1="57.2" x2="1220.4" y2="81.8" stroke="#8a8a8a" stroke-width="1" />
<line x1="1210.6" y1="62.120000000000005" x2="1230.2" y2="62.120000000000005" stroke="#8a8a8a" stroke-width="1" />
<line x1="1210.6" y1="67.04" x2="1230.2" y2="67.04" stroke="#8a8a8a" stroke-width="1" />
<line x1="1210.6" y1="71.96000000000001" x2="1230.2" y2="71.96000000000001" stroke="#8a8a8a" stroke-width="1" />
<line x1="1210.6" y1="76.88" x2="1230.2" y2="76.88" stroke="#8a8a8a" stroke-width="1" />
<line x1="1213" y1="59.660000000000004" x2="1218" y2="59.660000000000004" stroke="#5b8fd0" stroke-width="1.1" />
<line x1="1213" y1="64.58" x2="1218" y2="64.58" stroke="#5b8fd0" stroke-width="1.1" />
<line x1="1213" y1="69.5" x2="1218" y2="69.5" stroke="#e8904a" stroke-width="1.1" />
<line x1="1222.8" y1="69.5" x2="1227.8" y2="69.5" stroke="#e8904a" stroke-width="1.1" />
<line x1="1213" y1="74.42" x2="1218" y2="74.42" stroke="#5b8fd0" stroke-width="1.1" />
<line x1="1213" y1="79.33999999999999" x2="1218" y2="79.33999999999999" stroke="#e8904a" stroke-width="1.1" />
<line x1="1222.8" y1="79.33999999999999" x2="1227.8" y2="79.33999999999999" stroke="#e8904a" stroke-width="1.1" />
<path d="M1209 57.8 L1205.3 57.8 L1205.3 63" fill="none" stroke="#8a8a8a" stroke-width="1" />
<rect x="1201.2" y="63.5" width="7.8" height="8" fill="#ffffff" stroke="#8a8a8a" stroke-width="1.1" />
<rect x="1201.2" y="73.5" width="7.8" height="8" fill="#ffffff" stroke="#8a8a8a" stroke-width="1.1" />
<path d="M1203.2 67.5 L1207 67.5 M1205.1 65.6 L1205.1 69.4 M1203.2 77.5 L1207 77.5 M1205.1 75.6 L1205.1 79.4" fill="none" stroke="#6a6a6a" stroke-width="0.9" />
<path d="M1239.8 58.8 L1244.6 58.8 M1242.2 56.4 L1242.2 61.2" fill="none" stroke="#b5b5b5" stroke-width="1.9" />
<line x1="1245.3" y1="56.5" x2="1253.3" y2="56.5" stroke="#bdbdbd" stroke-width="0.9" />
<line x1="1249.3" y1="58.6" x2="1253.3" y2="58.6" stroke="#e2e2e2" stroke-width="0.9" />
<line x1="1249.3" y1="60.5" x2="1253.3" y2="60.5" stroke="#e6e6e6" stroke-width="0.9" />
<line x1="1245.3" y1="61.5" x2="1253.3" y2="61.5" stroke="#bdbdbd" stroke-width="0.9" />
<line x1="1249.3" y1="63.4" x2="1253.3" y2="63.4" stroke="#d6d6d6" stroke-width="0.9" />
<line x1="1249.3" y1="65.5" x2="1253.3" y2="65.5" stroke="#e2e2e2" stroke-width="0.9" />
<line x1="1245.3" y1="67.4" x2="1253.3" y2="67.4" stroke="#bdbdbd" stroke-width="0.9" />
<path d="M1239.8 80.6 L1244.6 80.6" fill="none" stroke="#b5b5b5" stroke-width="1.9" />
<line x1="1245.3" y1="77.6" x2="1253.3" y2="77.6" stroke="#bdbdbd" stroke-width="0.9" />
<line x1="1249.3" y1="79.4" x2="1253.3" y2="79.4" stroke="#d6d6d6" stroke-width="0.9" />
<line x1="1249.3" y1="81.6" x2="1253.3" y2="81.6" stroke="#e2e2e2" stroke-width="0.9" />
<line x1="1245.3" y1="83.5" x2="1253.3" y2="83.5" stroke="#bdbdbd" stroke-width="0.9" />
<line x1="1249.3" y1="85.3" x2="1253.3" y2="85.3" stroke="#e2e2e2" stroke-width="0.9" />
<line x1="1249.3" y1="87.2" x2="1253.3" y2="87.2" stroke="#d6d6d6" stroke-width="0.9" />
<line x1="1245.3" y1="89.2" x2="1253.3" y2="89.2" stroke="#bdbdbd" stroke-width="0.9" />
<rect x="6.5" y="147.5" width="101" height="23" fill="#ffffff" stroke="#c6c6c6" stroke-width="1" />
<text x="11.50" y="164.00" font-size="13" fill="#333333" textLength="15.00" lengthAdjust="spacingAndGlyphs" >A1</text>
<path d="M95 157.5 L101 157.5 L98 160.5 Z" fill="#555555" />
<rect x="122" y="153.8" width="1.3" height="1.6" fill="#9a9a9a" />
<rect x="122" y="157.7" width="1.3" height="1.6" fill="#9a9a9a" />
<rect x="122" y="161.4" width="1.3" height="1.6" fill="#9a9a9a" />
<rect x="138.5" y="147.5" width="108.5" height="23" fill="#ffffff" stroke="#c6c6c6" stroke-width="1" />
<path d="M150.5 153.2 L163 164.6 M163 153.2 L150.5 164.6" fill="none" stroke="#c0c0c0" stroke-width="1.6" stroke-linecap="round"/>
<path d="M186.2 159.7 L191.4 164.6 L199.8 153.6" fill="none" stroke="#cacaca" stroke-width="2.6" stroke-linecap="round" stroke-linejoin="round"/>
<path d="M221.3 166.3 Q222.8 167.2 224.3 165.6 Q225.6 163.8 226.8 157 Q227.8 151.5 230.3 151 Q231.8 150.9 232.4 151.6" fill="none" stroke="#6a6a6a" stroke-width="1.5" stroke-linecap="round"/>
<path d="M224.2 156.2 L230.8 156.2" fill="none" stroke="#6a6a6a" stroke-width="1.1" />
<path d="M229.3 158.2 Q230.6 157.6 231.3 159.2 L233.8 163.6 Q234.5 164.8 235.8 164 M236.2 158.2 Q235 157.8 233.4 160 L230.8 163.6 Q230 164.8 229 164.2" fill="none" stroke="#6a6a6a" stroke-width="1.2" stroke-linecap="round"/>
<rect x="250.5" y="147.5" width="1279.5" height="100" fill="#ffffff" stroke="#d0d0d0" stroke-width="1" />
<path d="M1517 162 L1521.5 157.5 L1526 162" fill="none" stroke="#555" stroke-width="1.4" />
<defs><clipPath id="gclip"><rect x="29.3" y="274.5" width="1484.5" height="609.1"/></clipPath><clipPath id="hclip"><rect x="2" y="250" width="1511.8" height="634"/></clipPath></defs>
<rect x="2" y="255.6" width="1511.8" height="18.900000000000006" fill="#ffffff" />
<rect x="29.3" y="255.6" width="240.2" height="18.900000000000006" fill="#e1e1e1" />
<path d="M14 272 L27 272 L27 259 Z" fill="#dfdfdf" />
<g clip-path="url(#hclip)">
<line x1="269.5" y1="255.6" x2="269.5" y2="274.5" stroke="#d6d6d6" stroke-width="1" />
<line x1="342.2" y1="255.6" x2="342.2" y2="274.5" stroke="#d6d6d6" stroke-width="1" />
<line x1="527.5" y1="255.6" x2="527.5" y2="274.5" stroke="#d6d6d6" stroke-width="1" />
<line x1="766.4" y1="255.6" x2="766.4" y2="274.5" stroke="#d6d6d6" stroke-width="1" />
<line x1="932.2" y1="255.6" x2="932.2" y2="274.5" stroke="#d6d6d6" stroke-width="1" />
<line x1="1125.0" y1="255.6" x2="1125.0" y2="274.5" stroke="#d6d6d6" stroke-width="1" />
<line x1="1270.4" y1="255.6" x2="1270.4" y2="274.5" stroke="#d6d6d6" stroke-width="1" />
<line x1="1488.4" y1="255.6" x2="1488.4" y2="274.5" stroke="#d6d6d6" stroke-width="1" />
<text x="149.40" y="270.20" font-size="12.5" fill="#217346" font-weight="bold" text-anchor="middle" >A</text>
<text x="305.85" y="270.20" font-size="12.5" fill="#4f4f4f" text-anchor="middle" >B</text>
<text x="434.85" y="270.20" font-size="12.5" fill="#4f4f4f" text-anchor="middle" >C</text>
<text x="646.95" y="270.20" font-size="12.5" fill="#4f4f4f" text-anchor="middle" >D</text>
<text x="849.30" y="270.20" font-size="12.5" fill="#4f4f4f" text-anchor="middle" >E</text>
<text x="1028.60" y="270.20" font-size="12.5" fill="#4f4f4f" text-anchor="middle" >F</text>
<text x="1197.70" y="270.20" font-size="12.5" fill="#4f4f4f" text-anchor="middle" >G</text>
<text x="1379.40" y="270.20" font-size="12.5" fill="#4f4f4f" text-anchor="middle" >H</text>
</g>
<line x1="2" y1="274.5" x2="1513.8" y2="274.5" stroke="#ababab" stroke-width="1" />
<rect x="2" y="274.5" width="27.3" height="609.1" fill="#ffffff" />
<rect x="2" y="274.5" width="27.3" height="19.2" fill="#e1e1e1" />
<line x1="2" y1="293.7" x2="29.3" y2="293.7" stroke="#dcdcdc" stroke-width="1" />
<line x1="29.3" y1="293.7" x2="1513.8" y2="293.7" stroke="#dadada" stroke-width="1" />
<line x1="2" y1="312.9" x2="29.3" y2="312.9" stroke="#dcdcdc" stroke-width="1" />
<line x1="29.3" y1="312.9" x2="1513.8" y2="312.9" stroke="#dadada" stroke-width="1" />
<line x1="2" y1="332.1" x2="29.3" y2="332.1" stroke="#dcdcdc" stroke-width="1" />
<line x1="29.3" y1="332.1" x2="1513.8" y2="332.1" stroke="#dadada" stroke-width="1" />
<line x1="2" y1="351.3" x2="29.3" y2="351.3" stroke="#dcdcdc" stroke-width="1" />
<line x1="29.3" y1="351.3" x2="1513.8" y2="351.3" stroke="#dadada" stroke-width="1" />
<line x1="2" y1="370.5" x2="29.3" y2="370.5" stroke="#dcdcdc" stroke-width="1" />
<line x1="29.3" y1="370.5" x2="1513.8" y2="370.5" stroke="#dadada" stroke-width="1" />
<line x1="2" y1="389.7" x2="29.3" y2="389.7" stroke="#dcdcdc" stroke-width="1" />
<line x1="29.3" y1="389.7" x2="1513.8" y2="389.7" stroke="#dadada" stroke-width="1" />
<line x1="2" y1="408.9" x2="29.3" y2="408.9" stroke="#dcdcdc" stroke-width="1" />
<line x1="29.3" y1="408.9" x2="1513.8" y2="408.9" stroke="#dadada" stroke-width="1" />
<line x1="2" y1="428.1" x2="29.3" y2="428.1" stroke="#dcdcdc" stroke-width="1" />
<line x1="29.3" y1="428.1" x2="1513.8" y2="428.1" stroke="#dadada" stroke-width="1" />
<line x1="2" y1="447.29999999999995" x2="29.3" y2="447.29999999999995" stroke="#dcdcdc" stroke-width="1" />
<line x1="29.3" y1="447.29999999999995" x2="1513.8" y2="447.29999999999995" stroke="#dadada" stroke-width="1" />
<line x1="2" y1="466.5" x2="29.3" y2="466.5" stroke="#dcdcdc" stroke-width="1" />
<line x1="29.3" y1="466.5" x2="1513.8" y2="466.5" stroke="#dadada" stroke-width="1" />
<line x1="2" y1="485.7" x2="29.3" y2="485.7" stroke="#dcdcdc" stroke-width="1" />
<line x1="29.3" y1="485.7" x2="1513.8" y2="485.7" stroke="#dadada" stroke-width="1" />
<line x1="2" y1="504.9" x2="29.3" y2="504.9" stroke="#dcdcdc" stroke-width="1" />
<line x1="29.3" y1="504.9" x2="1513.8" y2="504.9" stroke="#dadada" stroke-width="1" />
<line x1="2" y1="524.1" x2="29.3" y2="524.1" stroke="#dcdcdc" stroke-width="1" />
<line x1="29.3" y1="524.1" x2="1513.8" y2="524.1" stroke="#dadada" stroke-width="1" />
<line x1="2" y1="543.3" x2="29.3" y2="543.3" stroke="#dcdcdc" stroke-width="1" />
<line x1="29.3" y1="543.3" x2="1513.8" y2="543.3" stroke="#dadada" stroke-width="1" />
<line x1="2" y1="562.5" x2="29.3" y2="562.5" stroke="#dcdcdc" stroke-width="1" />
<line x1="29.3" y1="562.5" x2="1513.8" y2="562.5" stroke="#dadada" stroke-width="1" />
<line x1="2" y1="581.7" x2="29.3" y2="581.7" stroke="#dcdcdc" stroke-width="1" />
<line x1="29.3" y1="581.7" x2="1513.8" y2="581.7" stroke="#dadada" stroke-width="1" />
<line x1="2" y1="600.9" x2="29.3" y2="600.9" stroke="#dcdcdc" stroke-width="1" />
<line x1="29.3" y1="600.9" x2="1513.8" y2="600.9" stroke="#dadada" stroke-width="1" />
<line x1="2" y1="620.0999999999999" x2="29.3" y2="620.0999999999999" stroke="#dcdcdc" stroke-width="1" />
<line x1="29.3" y1="620.0999999999999" x2="1513.8" y2="620.0999999999999" stroke="#dadada" stroke-width="1" />
<line x1="2" y1="639.3" x2="29.3" y2="639.3" stroke="#dcdcdc" stroke-width="1" />
<line x1="29.3" y1="639.3" x2="1513.8" y2="639.3" stroke="#dadada" stroke-width="1" />
<line x1="2" y1="658.5" x2="29.3" y2="658.5" stroke="#dcdcdc" stroke-width="1" />
<line x1="29.3" y1="658.5" x2="1513.8" y2="658.5" stroke="#dadada" stroke-width="1" />
<line x1="2" y1="677.7" x2="29.3" y2="677.7" stroke="#dcdcdc" stroke-width="1" />
<line x1="29.3" y1="677.7" x2="1513.8" y2="677.7" stroke="#dadada" stroke-width="1" />
<line x1="2" y1="696.9" x2="29.3" y2="696.9" stroke="#dcdcdc" stroke-width="1" />
<line x1="29.3" y1="696.9" x2="1513.8" y2="696.9" stroke="#dadada" stroke-width="1" />
<line x1="2" y1="716.0999999999999" x2="29.3" y2="716.0999999999999" stroke="#dcdcdc" stroke-width="1" />
<line x1="29.3" y1="716.0999999999999" x2="1513.8" y2="716.0999999999999" stroke="#dadada" stroke-width="1" />
<line x1="2" y1="735.3" x2="29.3" y2="735.3" stroke="#dcdcdc" stroke-width="1" />
<line x1="29.3" y1="735.3" x2="1513.8" y2="735.3" stroke="#dadada" stroke-width="1" />
<line x1="2" y1="754.5" x2="29.3" y2="754.5" stroke="#dcdcdc" stroke-width="1" />
<line x1="29.3" y1="754.5" x2="1513.8" y2="754.5" stroke="#dadada" stroke-width="1" />
<line x1="2" y1="773.7" x2="29.3" y2="773.7" stroke="#dcdcdc" stroke-width="1" />
<line x1="29.3" y1="773.7" x2="1513.8" y2="773.7" stroke="#dadada" stroke-width="1" />
<line x1="2" y1="792.9" x2="29.3" y2="792.9" stroke="#dcdcdc" stroke-width="1" />
<line x1="29.3" y1="792.9" x2="1513.8" y2="792.9" stroke="#dadada" stroke-width="1" />
<line x1="2" y1="812.1" x2="29.3" y2="812.1" stroke="#dcdcdc" stroke-width="1" />
<line x1="29.3" y1="812.1" x2="1513.8" y2="812.1" stroke="#dadada" stroke-width="1" />
<line x1="2" y1="831.3" x2="29.3" y2="831.3" stroke="#dcdcdc" stroke-width="1" />
<line x1="29.3" y1="831.3" x2="1513.8" y2="831.3" stroke="#dadada" stroke-width="1" />
<line x1="2" y1="850.5" x2="29.3" y2="850.5" stroke="#dcdcdc" stroke-width="1" />
<line x1="29.3" y1="850.5" x2="1513.8" y2="850.5" stroke="#dadada" stroke-width="1" />
<line x1="2" y1="869.6999999999999" x2="29.3" y2="869.6999999999999" stroke="#dcdcdc" stroke-width="1" />
<line x1="29.3" y1="869.6999999999999" x2="1513.8" y2="869.6999999999999" stroke="#dadada" stroke-width="1" />
<line x1="269.5" y1="274.5" x2="269.5" y2="883.6" stroke="#dadada" stroke-width="1" />
<line x1="342.2" y1="274.5" x2="342.2" y2="883.6" stroke="#dadada" stroke-width="1" />
<line x1="527.5" y1="274.5" x2="527.5" y2="883.6" stroke="#dadada" stroke-width="1" />
<line x1="766.4" y1="274.5" x2="766.4" y2="883.6" stroke="#dadada" stroke-width="1" />
<line x1="932.2" y1="274.5" x2="932.2" y2="883.6" stroke="#dadada" stroke-width="1" />
<line x1="1125.0" y1="274.5" x2="1125.0" y2="883.6" stroke="#dadada" stroke-width="1" />
<line x1="1270.4" y1="274.5" x2="1270.4" y2="883.6" stroke="#dadada" stroke-width="1" />
<line x1="1488.4" y1="274.5" x2="1488.4" y2="883.6" stroke="#dadada" stroke-width="1" />
<line x1="29.3" y1="255.6" x2="29.3" y2="274.5" stroke="#d0d0d0" stroke-width="1" />
<line x1="29.3" y1="274.5" x2="29.3" y2="883.6" stroke="#ababab" stroke-width="1" />
<line x1="1513.8" y1="274.5" x2="1513.8" y2="883.6" stroke="#9e9e9e" stroke-width="1" />
<g clip-path="url(#gclip)">
<text x="32.50" y="289.20" font-size="13" fill="#000000" >#host_uuid</text>
<text x="272.70" y="289.20" font-size="13" fill="#000000" >host_name</text>
<text x="345.40" y="289.20" font-size="13" fill="#000000" >host_name_anonymous_hash</text>
<text x="530.70" y="289.20" font-size="13" fill="#000000" >check_uuid</text>
<text x="769.60" y="289.20" font-size="13" fill="#000000" >check_name</text>
<text x="935.40" y="289.20" font-size="13" fill="#000000" >check_name_anonymous_hash</text>
<text x="1128.20" y="289.20" font-size="13" fill="#000000" >command_name</text>
<text x="1273.60" y="289.20" font-size="13" fill="#000000" >command_name_anonymous_hash</text>
<text x="1491.60" y="289.20" font-size="13" fill="#000000" >real</text>
<text x="32.50" y="308.40" font-size="13" fill="#000000" >dfe65e40072b41b8950ed69d1329cc48</text>
<text x="272.70" y="308.40" font-size="13" fill="#000000" >srv-15</text>
<text x="345.40" y="308.40" font-size="13" fill="#000000" >anonymous-hash-0f628613ec</text>
<text x="530.70" y="308.40" font-size="13" fill="#000000" >0f31a3424df44ae41053d5c72dbc7eda</text>
<text x="769.60" y="308.40" font-size="13" fill="#000000" >dump-check-example-2-3</text>
<text x="935.40" y="308.40" font-size="13" fill="#000000" >anonymous-hash-ab3dec090e</text>
<text x="1128.20" y="308.40" font-size="13" fill="#000000" >dump-check-example-2</text>
<text x="1273.60" y="308.40" font-size="13" fill="#000000" >anonymous-hash-aa36432587</text>
<text x="1491.60" y="308.40" font-size="13" fill="#000000" >All</text>
<text x="32.50" y="327.60" font-size="13" fill="#000000" >1b7ce868df5547038603eec61616cae2</text>
<text x="272.70" y="327.60" font-size="13" fill="#000000" >srv-7</text>
<text x="345.40" y="327.60" font-size="13" fill="#000000" >anonymous-hash-eb645d6b77</text>
<text x="530.70" y="327.60" font-size="13" fill="#000000" >24e86f31b7f133bda96ac03a67ff0f14</text>
<text x="769.60" y="327.60" font-size="13" fill="#000000" >dump-check-example-2-13</text>
<text x="935.40" y="327.60" font-size="13" fill="#000000" >anonymous-hash-a6eb5d73e9</text>
<text x="1128.20" y="327.60" font-size="13" fill="#000000" >dump-check-example-2</text>
<text x="1273.60" y="327.60" font-size="13" fill="#000000" >anonymous-hash-aa36432587</text>
<text x="1491.60" y="327.60" font-size="13" fill="#000000" >All</text>
<text x="32.50" y="346.80" font-size="13" fill="#000000" >8bc339daa0a311eda85d080027940ca8</text>
<text x="272.70" y="346.80" font-size="13" fill="#000000" >srv-2</text>
<text x="345.40" y="346.80" font-size="13" fill="#000000" >anonymous-hash-6fb60b8226</text>
<text x="530.70" y="346.80" font-size="13" fill="#000000" >bb64373c94c329a13609798292c7db56</text>
<text x="769.60" y="346.80" font-size="13" fill="#000000" >dump-check-example-2-14</text>
<text x="935.40" y="346.80" font-size="13" fill="#000000" >anonymous-hash-19848ce407</text>
<text x="1128.20" y="346.80" font-size="13" fill="#000000" >dump-check-example-2</text>
<text x="1273.60" y="346.80" font-size="13" fill="#000000" >anonymous-hash-aa36432587</text>
<text x="1491.60" y="346.80" font-size="13" fill="#000000" >cust</text>
<text x="32.50" y="366.00" font-size="13" fill="#000000" >8bcd91c8a0a311edb99d080027940ca8</text>
<text x="272.70" y="366.00" font-size="13" fill="#000000" >srv-8</text>
<text x="345.40" y="366.00" font-size="13" fill="#000000" >anonymous-hash-35a25c2308</text>
<text x="530.70" y="366.00" font-size="13" fill="#000000" >525e131883b1d7c7c30901fef78e992b</text>
<text x="769.60" y="366.00" font-size="13" fill="#000000" >dump-check-example-2-1</text>
<text x="935.40" y="366.00" font-size="13" fill="#000000" >anonymous-hash-2e9e104669</text>
<text x="1128.20" y="366.00" font-size="13" fill="#000000" >dump-check-example-2</text>
<text x="1273.60" y="366.00" font-size="13" fill="#000000" >anonymous-hash-aa36432587</text>
<text x="1491.60" y="366.00" font-size="13" fill="#000000" >cust</text>
<text x="32.50" y="385.20" font-size="13" fill="#000000" >8bd19548a0a311ed8e0f080027940ca8</text>
<text x="272.70" y="385.20" font-size="13" fill="#000000" >srv-10</text>
<text x="345.40" y="385.20" font-size="13" fill="#000000" >anonymous-hash-a89f7681d1</text>
<text x="530.70" y="385.20" font-size="13" fill="#000000" >bb64373c94c329a13609798292c7db56</text>
<text x="769.60" y="385.20" font-size="13" fill="#000000" >dump-check-example-2-14</text>
<text x="935.40" y="385.20" font-size="13" fill="#000000" >anonymous-hash-19848ce407</text>
<text x="1128.20" y="385.20" font-size="13" fill="#000000" >dump-check-example-2</text>
<text x="1273.60" y="385.20" font-size="13" fill="#000000" >anonymous-hash-aa36432587</text>
<text x="1491.60" y="385.20" font-size="13" fill="#000000" >cust</text>
<text x="32.50" y="404.40" font-size="13" fill="#000000" >8ae43305c6b6490d8129c92d58ca8082</text>
<text x="272.70" y="404.40" font-size="13" fill="#000000" >srv-1</text>
<text x="345.40" y="404.40" font-size="13" fill="#000000" >anonymous-hash-91782e8454</text>
<text x="530.70" y="404.40" font-size="13" fill="#000000" >f5d19ea12aa58df945e0e17d25765be8</text>
<text x="769.60" y="404.40" font-size="13" fill="#000000" >dump-check-example-2-10</text>
<text x="935.40" y="404.40" font-size="13" fill="#000000" >anonymous-hash-688a5ae71d</text>
<text x="1128.20" y="404.40" font-size="13" fill="#000000" >dump-check-example-2</text>
<text x="1273.60" y="404.40" font-size="13" fill="#000000" >anonymous-hash-aa36432587</text>
<text x="1491.60" y="404.40" font-size="13" fill="#000000" >All</text>
<text x="32.50" y="423.60" font-size="13" fill="#000000" >1884e097f2a74ee7b82f1a8479852ea1</text>
<text x="272.70" y="423.60" font-size="13" fill="#000000" >srv-5</text>
<text x="345.40" y="423.60" font-size="13" fill="#000000" >anonymous-hash-44610da532</text>
<text x="530.70" y="423.60" font-size="13" fill="#000000" >ca8785fa54a06fbf7386fc295212a811</text>
<text x="769.60" y="423.60" font-size="13" fill="#000000" >dump-check-example-2-4</text>
<text x="935.40" y="423.60" font-size="13" fill="#000000" >anonymous-hash-ff61e06169</text>
<text x="1128.20" y="423.60" font-size="13" fill="#000000" >dump-check-example-2</text>
<text x="1273.60" y="423.60" font-size="13" fill="#000000" >anonymous-hash-aa36432587</text>
<text x="1491.60" y="423.60" font-size="13" fill="#000000" >All</text>
<text x="32.50" y="442.80" font-size="13" fill="#000000" >f4f1c89d4cea4c938ca2f86acfe7a2c0</text>
<text x="272.70" y="442.80" font-size="13" fill="#000000" >srv-17</text>
<text x="345.40" y="442.80" font-size="13" fill="#000000" >anonymous-hash-a6f9161d26</text>
<text x="530.70" y="442.80" font-size="13" fill="#000000" >0f31a3424df44ae41053d5c72dbc7eda</text>
<text x="769.60" y="442.80" font-size="13" fill="#000000" >dump-check-example-2-3</text>
<text x="935.40" y="442.80" font-size="13" fill="#000000" >anonymous-hash-ab3dec090e</text>
<text x="1128.20" y="442.80" font-size="13" fill="#000000" >dump-check-example-2</text>
<text x="1273.60" y="442.80" font-size="13" fill="#000000" >anonymous-hash-aa36432587</text>
<text x="1491.60" y="442.80" font-size="13" fill="#000000" >All</text>
<text x="32.50" y="462.00" font-size="13" fill="#000000" >8bdc4e2aa0a311eda148080027940ca8</text>
<text x="272.70" y="462.00" font-size="13" fill="#000000" >srv-16</text>
<text x="345.40" y="462.00" font-size="13" fill="#000000" >anonymous-hash-bb7dc70c8e</text>
<text x="530.70" y="462.00" font-size="13" fill="#000000" >bb64373c94c329a13609798292c7db56</text>
<text x="769.60" y="462.00" font-size="13" fill="#000000" >dump-check-example-2-14</text>
<text x="935.40" y="462.00" font-size="13" fill="#000000" >anonymous-hash-19848ce407</text>
<text x="1128.20" y="462.00" font-size="13" fill="#000000" >dump-check-example-2</text>
<text x="1273.60" y="462.00" font-size="13" fill="#000000" >anonymous-hash-aa36432587</text>
<text x="1491.60" y="462.00" font-size="13" fill="#000000" >cust</text>
<text x="32.50" y="481.20" font-size="13" fill="#000000" >8bd19548a0a311ed8e0f080027940ca8</text>
<text x="272.70" y="481.20" font-size="13" fill="#000000" >srv-10</text>
<text x="345.40" y="481.20" font-size="13" fill="#000000" >anonymous-hash-a89f7681d1</text>
<text x="530.70" y="481.20" font-size="13" fill="#000000" >525e131883b1d7c7c30901fef78e992b</text>
<text x="769.60" y="481.20" font-size="13" fill="#000000" >dump-check-example-2-1</text>
<text x="935.40" y="481.20" font-size="13" fill="#000000" >anonymous-hash-2e9e104669</text>
<text x="1128.20" y="481.20" font-size="13" fill="#000000" >dump-check-example-2</text>
<text x="1273.60" y="481.20" font-size="13" fill="#000000" >anonymous-hash-aa36432587</text>
<text x="1491.60" y="481.20" font-size="13" fill="#000000" >cust</text>
<text x="32.50" y="500.40" font-size="13" fill="#000000" >8be631e2a0a311edb99d080027940ca8</text>
<text x="272.70" y="500.40" font-size="13" fill="#000000" >srv-20</text>
<text x="345.40" y="500.40" font-size="13" fill="#000000" >anonymous-hash-44cd9c07f8</text>
<text x="530.70" y="500.40" font-size="13" fill="#000000" >a35e804e5baa8731cf57af94fd6823ff</text>
<text x="769.60" y="500.40" font-size="13" fill="#000000" >dump-check-example-2-5</text>
<text x="935.40" y="500.40" font-size="13" fill="#000000" >anonymous-hash-5f8ecadf97</text>
<text x="1128.20" y="500.40" font-size="13" fill="#000000" >dump-check-example-2</text>
<text x="1273.60" y="500.40" font-size="13" fill="#000000" >anonymous-hash-aa36432587</text>
<text x="1491.60" y="500.40" font-size="13" fill="#000000" >cust</text>
<text x="32.50" y="519.60" font-size="13" fill="#000000" >340f7d2fcaab43ccb394e0fd6d427469</text>
<text x="272.70" y="519.60" font-size="13" fill="#000000" >srv-13</text>
<text x="345.40" y="519.60" font-size="13" fill="#000000" >anonymous-hash-20686577d2</text>
<text x="1128.20" y="519.60" font-size="13" fill="#000000" >check-host-alive</text>
<text x="1273.60" y="519.60" font-size="13" fill="#000000" >anonymous-hash-2d6a3ff550</text>
<text x="1491.60" y="519.60" font-size="13" fill="#000000" >All</text>
<text x="32.50" y="538.80" font-size="13" fill="#000000" >dfe65e40072b41b8950ed69d1329cc48</text>
<text x="272.70" y="538.80" font-size="13" fill="#000000" >srv-15</text>
<text x="345.40" y="538.80" font-size="13" fill="#000000" >anonymous-hash-0f628613ec</text>
<text x="530.70" y="538.80" font-size="13" fill="#000000" >f5d19ea12aa58df945e0e17d25765be8</text>
<text x="769.60" y="538.80" font-size="13" fill="#000000" >dump-check-example-2-10</text>
<text x="935.40" y="538.80" font-size="13" fill="#000000" >anonymous-hash-688a5ae71d</text>
<text x="1128.20" y="538.80" font-size="13" fill="#000000" >dump-check-example-2</text>
<text x="1273.60" y="538.80" font-size="13" fill="#000000" >anonymous-hash-aa36432587</text>
<text x="1491.60" y="538.80" font-size="13" fill="#000000" >All</text>
<text x="32.50" y="558.00" font-size="13" fill="#000000" >d26e317996a24416955f04f759f93c18</text>
<text x="272.70" y="558.00" font-size="13" fill="#000000" >srv-9</text>
<text x="345.40" y="558.00" font-size="13" fill="#000000" >anonymous-hash-81e86dc074</text>
<text x="530.70" y="558.00" font-size="13" fill="#000000" >551f5bcceb94b61e96a31490a4444ba2</text>
<text x="769.60" y="558.00" font-size="13" fill="#000000" >dump-check-example-2-9</text>
<text x="935.40" y="558.00" font-size="13" fill="#000000" >anonymous-hash-b5242c09dc</text>
<text x="1128.20" y="558.00" font-size="13" fill="#000000" >dump-check-example-2</text>
<text x="1273.60" y="558.00" font-size="13" fill="#000000" >anonymous-hash-aa36432587</text>
<text x="1491.60" y="558.00" font-size="13" fill="#000000" >All</text>
<text x="32.50" y="577.20" font-size="13" fill="#000000" >1b7ce868df5547038603eec61616cae2</text>
<text x="272.70" y="577.20" font-size="13" fill="#000000" >srv-7</text>
<text x="345.40" y="577.20" font-size="13" fill="#000000" >anonymous-hash-eb645d6b77</text>
<text x="530.70" y="577.20" font-size="13" fill="#000000" >0f31a3424df44ae41053d5c72dbc7eda</text>
<text x="769.60" y="577.20" font-size="13" fill="#000000" >dump-check-example-2-3</text>
<text x="935.40" y="577.20" font-size="13" fill="#000000" >anonymous-hash-ab3dec090e</text>
<text x="1128.20" y="577.20" font-size="13" fill="#000000" >dump-check-example-2</text>
<text x="1273.60" y="577.20" font-size="13" fill="#000000" >anonymous-hash-aa36432587</text>
<text x="1491.60" y="577.20" font-size="13" fill="#000000" >All</text>
<text x="32.50" y="596.40" font-size="13" fill="#000000" >8bc7135ca0a311eda148080027940ca8</text>
<text x="272.70" y="596.40" font-size="13" fill="#000000" >srv-4</text>
<text x="345.40" y="596.40" font-size="13" fill="#000000" >anonymous-hash-954836fc25</text>
<text x="530.70" y="596.40" font-size="13" fill="#000000" >525e131883b1d7c7c30901fef78e992b</text>
<text x="769.60" y="596.40" font-size="13" fill="#000000" >dump-check-example-2-1</text>
<text x="935.40" y="596.40" font-size="13" fill="#000000" >anonymous-hash-2e9e104669</text>
<text x="1128.20" y="596.40" font-size="13" fill="#000000" >dump-check-example-2</text>
<text x="1273.60" y="596.40" font-size="13" fill="#000000" >anonymous-hash-aa36432587</text>
<text x="1491.60" y="596.40" font-size="13" fill="#000000" >cust</text>
<text x="32.50" y="615.60" font-size="13" fill="#000000" >8bd9ad28a0a311eda85d080027940ca8</text>
<text x="272.70" y="615.60" font-size="13" fill="#000000" >srv-14</text>
<text x="345.40" y="615.60" font-size="13" fill="#000000" >anonymous-hash-72169f192f</text>
<text x="530.70" y="615.60" font-size="13" fill="#000000" >0f31a3424df44ae41053d5c72dbc7eda</text>
<text x="769.60" y="615.60" font-size="13" fill="#000000" >dump-check-example-2-3</text>
<text x="935.40" y="615.60" font-size="13" fill="#000000" >anonymous-hash-ab3dec090e</text>
<text x="1128.20" y="615.60" font-size="13" fill="#000000" >dump-check-example-2</text>
<text x="1273.60" y="615.60" font-size="13" fill="#000000" >anonymous-hash-aa36432587</text>
<text x="1491.60" y="615.60" font-size="13" fill="#000000" >cust</text>
<text x="32.50" y="634.80" font-size="13" fill="#000000" >8bd624b4a0a311edb635080027940ca8</text>
<text x="272.70" y="634.80" font-size="13" fill="#000000" >srv-12</text>
<text x="345.40" y="634.80" font-size="13" fill="#000000" >anonymous-hash-089f065b6a</text>
<text x="530.70" y="634.80" font-size="13" fill="#000000" >525e131883b1d7c7c30901fef78e992b</text>
<text x="769.60" y="634.80" font-size="13" fill="#000000" >dump-check-example-2-1</text>
<text x="935.40" y="634.80" font-size="13" fill="#000000" >anonymous-hash-2e9e104669</text>
<text x="1128.20" y="634.80" font-size="13" fill="#000000" >dump-check-example-2</text>
<text x="1273.60" y="634.80" font-size="13" fill="#000000" >anonymous-hash-aa36432587</text>
<text x="1491.60" y="634.80" font-size="13" fill="#000000" >cust</text>
<text x="32.50" y="654.00" font-size="13" fill="#000000" >2d833e2aeebc488385c10043026ebeda</text>
<text x="272.70" y="654.00" font-size="13" fill="#000000" >srv-19</text>
<text x="345.40" y="654.00" font-size="13" fill="#000000" >anonymous-hash-5ed4f21502</text>
<text x="530.70" y="654.00" font-size="13" fill="#000000" >bb64373c94c329a13609798292c7db56</text>
<text x="769.60" y="654.00" font-size="13" fill="#000000" >dump-check-example-2-14</text>
<text x="935.40" y="654.00" font-size="13" fill="#000000" >anonymous-hash-19848ce407</text>
<text x="1128.20" y="654.00" font-size="13" fill="#000000" >dump-check-example-2</text>
<text x="1273.60" y="654.00" font-size="13" fill="#000000" >anonymous-hash-aa36432587</text>
<text x="1491.60" y="654.00" font-size="13" fill="#000000" >All</text>
<text x="32.50" y="673.20" font-size="13" fill="#000000" >340f7d2fcaab43ccb394e0fd6d427469</text>
<text x="272.70" y="673.20" font-size="13" fill="#000000" >srv-13</text>
<text x="345.40" y="673.20" font-size="13" fill="#000000" >anonymous-hash-20686577d2</text>
<text x="530.70" y="673.20" font-size="13" fill="#000000" >b4e36da700f3755d237eacd9fbee332e</text>
<text x="769.60" y="673.20" font-size="13" fill="#000000" >dump-check-example-2-6</text>
<text x="935.40" y="673.20" font-size="13" fill="#000000" >anonymous-hash-8ac2db040f</text>
<text x="1128.20" y="673.20" font-size="13" fill="#000000" >dump-check-example-2</text>
<text x="1273.60" y="673.20" font-size="13" fill="#000000" >anonymous-hash-aa36432587</text>
<text x="1491.60" y="673.20" font-size="13" fill="#000000" >All</text>
<text x="32.50" y="692.40" font-size="13" fill="#000000" >340f7d2fcaab43ccb394e0fd6d427469</text>
<text x="272.70" y="692.40" font-size="13" fill="#000000" >srv-13</text>
<text x="345.40" y="692.40" font-size="13" fill="#000000" >anonymous-hash-20686577d2</text>
<text x="530.70" y="692.40" font-size="13" fill="#000000" >512071c5e2b49849ed7d72ae5f657578</text>
<text x="769.60" y="692.40" font-size="13" fill="#000000" >dump-check-example-2-7</text>
<text x="935.40" y="692.40" font-size="13" fill="#000000" >anonymous-hash-176d0d8c03</text>
<text x="1128.20" y="692.40" font-size="13" fill="#000000" >dump-check-example-2</text>
<text x="1273.60" y="692.40" font-size="13" fill="#000000" >anonymous-hash-aa36432587</text>
<text x="1491.60" y="692.40" font-size="13" fill="#000000" >All</text>
<text x="32.50" y="711.60" font-size="13" fill="#000000" >8bc7135ca0a311eda148080027940ca8</text>
<text x="272.70" y="711.60" font-size="13" fill="#000000" >srv-4</text>
<text x="345.40" y="711.60" font-size="13" fill="#000000" >anonymous-hash-954836fc25</text>
<text x="530.70" y="711.60" font-size="13" fill="#000000" >424c8690e6ffd9da09f892f383b49de1</text>
<text x="769.60" y="711.60" font-size="13" fill="#000000" >dump-check-example-2-15</text>
<text x="935.40" y="711.60" font-size="13" fill="#000000" >anonymous-hash-80e21d30ac</text>
<text x="1128.20" y="711.60" font-size="13" fill="#000000" >dump-check-example-2</text>
<text x="1273.60" y="711.60" font-size="13" fill="#000000" >anonymous-hash-aa36432587</text>
<text x="1491.60" y="711.60" font-size="13" fill="#000000" >cust</text>
<text x="32.50" y="730.80" font-size="13" fill="#000000" >1884e097f2a74ee7b82f1a8479852ea1</text>
<text x="272.70" y="730.80" font-size="13" fill="#000000" >srv-5</text>
<text x="345.40" y="730.80" font-size="13" fill="#000000" >anonymous-hash-44610da532</text>
<text x="1128.20" y="730.80" font-size="13" fill="#000000" >check-host-alive</text>
<text x="1273.60" y="730.80" font-size="13" fill="#000000" >anonymous-hash-2d6a3ff550</text>
<text x="1491.60" y="730.80" font-size="13" fill="#000000" >All</text>
<text x="32.50" y="750.00" font-size="13" fill="#000000" >8bd9ad28a0a311eda85d080027940ca8</text>
<text x="272.70" y="750.00" font-size="13" fill="#000000" >srv-14</text>
<text x="345.40" y="750.00" font-size="13" fill="#000000" >anonymous-hash-72169f192f</text>
<text x="530.70" y="750.00" font-size="13" fill="#000000" >b4e36da700f3755d237eacd9fbee332e</text>
<text x="769.60" y="750.00" font-size="13" fill="#000000" >dump-check-example-2-6</text>
<text x="935.40" y="750.00" font-size="13" fill="#000000" >anonymous-hash-8ac2db040f</text>
<text x="1128.20" y="750.00" font-size="13" fill="#000000" >dump-check-example-2</text>
<text x="1273.60" y="750.00" font-size="13" fill="#000000" >anonymous-hash-aa36432587</text>
<text x="1491.60" y="750.00" font-size="13" fill="#000000" >cust</text>
<text x="32.50" y="769.20" font-size="13" fill="#000000" >8bd19548a0a311ed8e0f080027940ca8</text>
<text x="272.70" y="769.20" font-size="13" fill="#000000" >srv-10</text>
<text x="345.40" y="769.20" font-size="13" fill="#000000" >anonymous-hash-a89f7681d1</text>
<text x="1128.20" y="769.20" font-size="13" fill="#000000" >check-host-alive</text>
<text x="1273.60" y="769.20" font-size="13" fill="#000000" >anonymous-hash-2d6a3ff550</text>
<text x="1491.60" y="769.20" font-size="13" fill="#000000" >cust</text>
<text x="32.50" y="788.40" font-size="13" fill="#000000" >8bc339daa0a311eda85d080027940ca8</text>
<text x="272.70" y="788.40" font-size="13" fill="#000000" >srv-2</text>
<text x="345.40" y="788.40" font-size="13" fill="#000000" >anonymous-hash-6fb60b8226</text>
<text x="530.70" y="788.40" font-size="13" fill="#000000" >0f31a3424df44ae41053d5c72dbc7eda</text>
<text x="769.60" y="788.40" font-size="13" fill="#000000" >dump-check-example-2-3</text>
<text x="935.40" y="788.40" font-size="13" fill="#000000" >anonymous-hash-ab3dec090e</text>
<text x="1128.20" y="788.40" font-size="13" fill="#000000" >dump-check-example-2</text>
<text x="1273.60" y="788.40" font-size="13" fill="#000000" >anonymous-hash-aa36432587</text>
<text x="1491.60" y="788.40" font-size="13" fill="#000000" >cust</text>
<text x="32.50" y="807.60" font-size="13" fill="#000000" >340f7d2fcaab43ccb394e0fd6d427469</text>
<text x="272.70" y="807.60" font-size="13" fill="#000000" >srv-13</text>
<text x="345.40" y="807.60" font-size="13" fill="#000000" >anonymous-hash-20686577d2</text>
<text x="530.70" y="807.60" font-size="13" fill="#000000" >1769d9759e8be6d3680ff5739f431752</text>
<text x="769.60" y="807.60" font-size="13" fill="#000000" >dump-check-example-2-12</text>
<text x="935.40" y="807.60" font-size="13" fill="#000000" >anonymous-hash-bb4ef5977d</text>
<text x="1128.20" y="807.60" font-size="13" fill="#000000" >dump-check-example-2</text>
<text x="1273.60" y="807.60" font-size="13" fill="#000000" >anonymous-hash-aa36432587</text>
<text x="1491.60" y="807.60" font-size="13" fill="#000000" >All</text>
<text x="32.50" y="826.80" font-size="13" fill="#000000" >340f7d2fcaab43ccb394e0fd6d427469</text>
<text x="272.70" y="826.80" font-size="13" fill="#000000" >srv-13</text>
<text x="345.40" y="826.80" font-size="13" fill="#000000" >anonymous-hash-20686577d2</text>
<text x="530.70" y="826.80" font-size="13" fill="#000000" >424c8690e6ffd9da09f892f383b49de1</text>
<text x="769.60" y="826.80" font-size="13" fill="#000000" >dump-check-example-2-15</text>
<text x="935.40" y="826.80" font-size="13" fill="#000000" >anonymous-hash-80e21d30ac</text>
<text x="1128.20" y="826.80" font-size="13" fill="#000000" >dump-check-example-2</text>
<text x="1273.60" y="826.80" font-size="13" fill="#000000" >anonymous-hash-aa36432587</text>
<text x="1491.60" y="826.80" font-size="13" fill="#000000" >All</text>
<text x="32.50" y="846.00" font-size="13" fill="#000000" >8be20806a0a311ed9182080027940ca8</text>
<text x="272.70" y="846.00" font-size="13" fill="#000000" >srv-18</text>
<text x="345.40" y="846.00" font-size="13" fill="#000000" >anonymous-hash-c7cf9a1e80</text>
<text x="530.70" y="846.00" font-size="13" fill="#000000" >1769d9759e8be6d3680ff5739f431752</text>
<text x="769.60" y="846.00" font-size="13" fill="#000000" >dump-check-example-2-12</text>
<text x="935.40" y="846.00" font-size="13" fill="#000000" >anonymous-hash-bb4ef5977d</text>
<text x="1128.20" y="846.00" font-size="13" fill="#000000" >dump-check-example-2</text>
<text x="1273.60" y="846.00" font-size="13" fill="#000000" >anonymous-hash-aa36432587</text>
<text x="1491.60" y="846.00" font-size="13" fill="#000000" >cust</text>
<text x="32.50" y="865.20" font-size="13" fill="#000000" >8bcd91c8a0a311edb99d080027940ca8</text>
<text x="272.70" y="865.20" font-size="13" fill="#000000" >srv-8</text>
<text x="345.40" y="865.20" font-size="13" fill="#000000" >anonymous-hash-35a25c2308</text>
<text x="530.70" y="865.20" font-size="13" fill="#000000" >6582a351a934f732b7096e3c8ddaf10a</text>
<text x="769.60" y="865.20" font-size="13" fill="#000000" >dump-check-example-2-8</text>
<text x="935.40" y="865.20" font-size="13" fill="#000000" >anonymous-hash-3395da4466</text>
<text x="1128.20" y="865.20" font-size="13" fill="#000000" >dump-check-example-2</text>
<text x="1273.60" y="865.20" font-size="13" fill="#000000" >anonymous-hash-aa36432587</text>
<text x="1491.60" y="865.20" font-size="13" fill="#000000" >cust</text>
<text x="32.50" y="884.40" font-size="13" fill="#000000" >8bdc4e2aa0a311eda148080027940ca8</text>
<text x="272.70" y="884.40" font-size="13" fill="#000000" >srv-16</text>
<text x="345.40" y="884.40" font-size="13" fill="#000000" >anonymous-hash-bb7dc70c8e</text>
<text x="530.70" y="884.40" font-size="13" fill="#000000" >512071c5e2b49849ed7d72ae5f657578</text>
<text x="769.60" y="884.40" font-size="13" fill="#000000" >dump-check-example-2-7</text>
<text x="935.40" y="884.40" font-size="13" fill="#000000" >anonymous-hash-176d0d8c03</text>
<text x="1128.20" y="884.40" font-size="13" fill="#000000" >dump-check-example-2</text>
<text x="1273.60" y="884.40" font-size="13" fill="#000000" >anonymous-hash-aa36432587</text>
<text x="1491.60" y="884.40" font-size="13" fill="#000000" >cust</text>
</g>
<text x="15.60" y="289.20" font-size="13" fill="#217346" font-weight="bold" text-anchor="middle" >1</text>
<text x="15.60" y="308.40" font-size="13" fill="#444444" text-anchor="middle" >2</text>
<text x="15.60" y="327.60" font-size="13" fill="#444444" text-anchor="middle" >3</text>
<text x="15.60" y="346.80" font-size="13" fill="#444444" text-anchor="middle" >4</text>
<text x="15.60" y="366.00" font-size="13" fill="#444444" text-anchor="middle" >5</text>
<text x="15.60" y="385.20" font-size="13" fill="#444444" text-anchor="middle" >6</text>
<text x="15.60" y="404.40" font-size="13" fill="#444444" text-anchor="middle" >7</text>
<text x="15.60" y="423.60" font-size="13" fill="#444444" text-anchor="middle" >8</text>
<text x="15.60" y="442.80" font-size="13" fill="#444444" text-anchor="middle" >9</text>
<text x="15.60" y="462.00" font-size="13" fill="#444444" text-anchor="middle" >10</text>
<text x="15.60" y="481.20" font-size="13" fill="#444444" text-anchor="middle" >11</text>
<text x="15.60" y="500.40" font-size="13" fill="#444444" text-anchor="middle" >12</text>
<text x="15.60" y="519.60" font-size="13" fill="#444444" text-anchor="middle" >13</text>
<text x="15.60" y="538.80" font-size="13" fill="#444444" text-anchor="middle" >14</text>
<text x="15.60" y="558.00" font-size="13" fill="#444444" text-anchor="middle" >15</text>
<text x="15.60" y="577.20" font-size="13" fill="#444444" text-anchor="middle" >16</text>
<text x="15.60" y="596.40" font-size="13" fill="#444444" text-anchor="middle" >17</text>
<text x="15.60" y="615.60" font-size="13" fill="#444444" text-anchor="middle" >18</text>
<text x="15.60" y="634.80" font-size="13" fill="#444444" text-anchor="middle" >19</text>
<text x="15.60" y="654.00" font-size="13" fill="#444444" text-anchor="middle" >20</text>
<text x="15.60" y="673.20" font-size="13" fill="#444444" text-anchor="middle" >21</text>
<text x="15.60" y="692.40" font-size="13" fill="#444444" text-anchor="middle" >22</text>
<text x="15.60" y="711.60" font-size="13" fill="#444444" text-anchor="middle" >23</text>
<text x="15.60" y="730.80" font-size="13" fill="#444444" text-anchor="middle" >24</text>
<text x="15.60" y="750.00" font-size="13" fill="#444444" text-anchor="middle" >25</text>
<text x="15.60" y="769.20" font-size="13" fill="#444444" text-anchor="middle" >26</text>
<text x="15.60" y="788.40" font-size="13" fill="#444444" text-anchor="middle" >27</text>
<text x="15.60" y="807.60" font-size="13" fill="#444444" text-anchor="middle" >28</text>
<text x="15.60" y="826.80" font-size="13" fill="#444444" text-anchor="middle" >29</text>
<text x="15.60" y="846.00" font-size="13" fill="#444444" text-anchor="middle" >30</text>
<text x="15.60" y="865.20" font-size="13" fill="#444444" text-anchor="middle" >31</text>
<text x="15.60" y="884.40" font-size="13" fill="#444444" text-anchor="middle" >32</text>
<rect x="29.6" y="274.0" width="239.6" height="19.4" fill="none" stroke="#217346" stroke-width="2.2" />
<rect x="267" y="291.5" width="4.5" height="4.5" fill="#217346" stroke="#ffffff" stroke-width="0.8" />
<rect x="1514.3" y="255.6" width="19.700000000000045" height="628.0" fill="#ffffff" />
<rect x="1517" y="272" width="14.6" height="611.6" fill="#e8e8e8" />
<rect x="1517.5" y="257.5" width="14" height="14" fill="#ffffff" stroke="#d0d0d0" stroke-width="1" />
<path d="M1521 266.5 L1524.5 262.8 L1528 266.5 Z" fill="#777777" />
<rect x="1517.5" y="272.8" width="14" height="50.8" fill="#ffffff" stroke="#c6c6c6" stroke-width="1" />
<rect x="1517.5" y="869.5" width="14" height="13.5" fill="#ffffff" stroke="#d0d0d0" stroke-width="1" />
<path d="M1521 874.5 L1528 874.5 L1524.5 878.2 Z" fill="#777777" />
<rect x="2" y="883.6" width="1532" height="23.399999999999977" fill="#f3f3f3" />
<line x1="2" y1="883.6" x2="1513.8" y2="883.6" stroke="#c8c8c8" stroke-width="1" />
<rect x="2" y="906.2" width="1532" height="1" fill="#ffffff" />
<path d="M24.2 895 L28 891.4 L28 898.6 Z" fill="#c4c4c4" />
<path d="M47.2 891.4 L51 895 L47.2 898.6 Z" fill="#c4c4c4" />
<rect x="84" y="883.6" width="58.3" height="20" fill="#ffffff" />
<line x1="84" y1="883.6" x2="84" y2="904" stroke="#c8c8c8" stroke-width="1" />
<line x1="142.3" y1="883.6" x2="142.3" y2="904" stroke="#c8c8c8" stroke-width="1" />
<rect x="84" y="902.4" width="58.3" height="1.8" fill="#217346" />
<text x="94.70" y="896.90" font-size="13" fill="#217346" font-weight="bold" textLength="37.00" lengthAdjust="spacingAndGlyphs" >Feuil2</text>
<text x="153.50" y="896.90" font-size="13" fill="#555555" textLength="33.30" lengthAdjust="spacingAndGlyphs" >Feuil1</text>
<line x1="199.5" y1="887" x2="199.5" y2="903" stroke="#c8c8c8" stroke-width="1" />
<circle cx="233.5" cy="895" r="7.6" fill="none" stroke="#7d7d7d" stroke-width="1.1"/>
<path d="M229.5 895 L237.5 895 M233.5 891 L233.5 899" fill="none" stroke="#6f6f6f" stroke-width="1.3" />
<rect x="919.5" y="890.5" width="1.3" height="1.4" fill="#9a9a9a" />
<rect x="919.5" y="894.5" width="1.3" height="1.4" fill="#9a9a9a" />
<rect x="919.5" y="898.5" width="1.3" height="1.4" fill="#9a9a9a" />
<rect x="934" y="887.5" width="580" height="15" fill="#e6e6e6" />
<rect x="934.5" y="888" width="14" height="14" fill="#ffffff" stroke="#c8c8c8" stroke-width="1" />
<path d="M943.5 891.5 L939.5 895 L943.5 898.5 Z" fill="#777777" />
<rect x="949" y="888" width="402.5" height="14" fill="#ffffff" stroke="#c0c0c0" stroke-width="1" />
<rect x="1499" y="888" width="14" height="14" fill="#ffffff" stroke="#c8c8c8" stroke-width="1" />
<path d="M1504 891.5 L1508 895 L1504 898.5 Z" fill="#777777" />
<rect x="2" y="907" width="1532" height="21" fill="#217346" />
<text x="7.50" y="921.50" font-size="11" fill="#e8f0eb" textLength="23.00" lengthAdjust="spacingAndGlyphs" >PRÊT</text>
<rect x="1249.7" y="907" width="33.3" height="21" fill="#185c37" />
<rect x="1261.5" y="912.5" width="10" height="9" fill="none" stroke="#ffffff" stroke-width="1" />
<line x1="1264.8" y1="912.5" x2="1264.8" y2="921.5" stroke="#ffffff" stroke-width="1" />
<line x1="1268.1" y1="912.5" x2="1268.1" y2="921.5" stroke="#ffffff" stroke-width="1" />
<line x1="1261.5" y1="915.5" x2="1271.5" y2="915.5" stroke="#ffffff" stroke-width="1" />
<line x1="1261.5" y1="918.5" x2="1271.5" y2="918.5" stroke="#ffffff" stroke-width="1" />
<rect x="1293.5" y="912" width="11" height="10" fill="none" stroke="#d5e3da" stroke-width="1" />
<rect x="1296" y="914.5" width="6" height="5" fill="none" stroke="#d5e3da" stroke-width="0.8" />
<rect x="1326.5" y="912" width="11.5" height="10" fill="none" stroke="#d5e3da" stroke-width="1" />
<rect x="1329" y="912" width="3" height="5" fill="#d5e3da" />
<rect x="1333.5" y="912" width="3" height="5" fill="#d5e3da" />
<line x1="1352.5" y1="917.5" x2="1358" y2="917.5" stroke="#f4f8f5" stroke-width="2.2" />
<line x1="1363" y1="917.5" x2="1463" y2="917.5" stroke="#eef4f0" stroke-width="1.1" />
<rect x="1411.2" y="913.5" width="4" height="9" fill="#f4f8f5" />
<path d="M1466.8 917.5 L1475.2 917.5 M1471 913.3 L1471 921.7" fill="none" stroke="#f4f8f5" stroke-width="2" />
<text x="1489.00" y="921.50" font-size="11" fill="#eef4f0" textLength="28.00" lengthAdjust="spacingAndGlyphs" >100 %</text>
</svg>
</body></html>
